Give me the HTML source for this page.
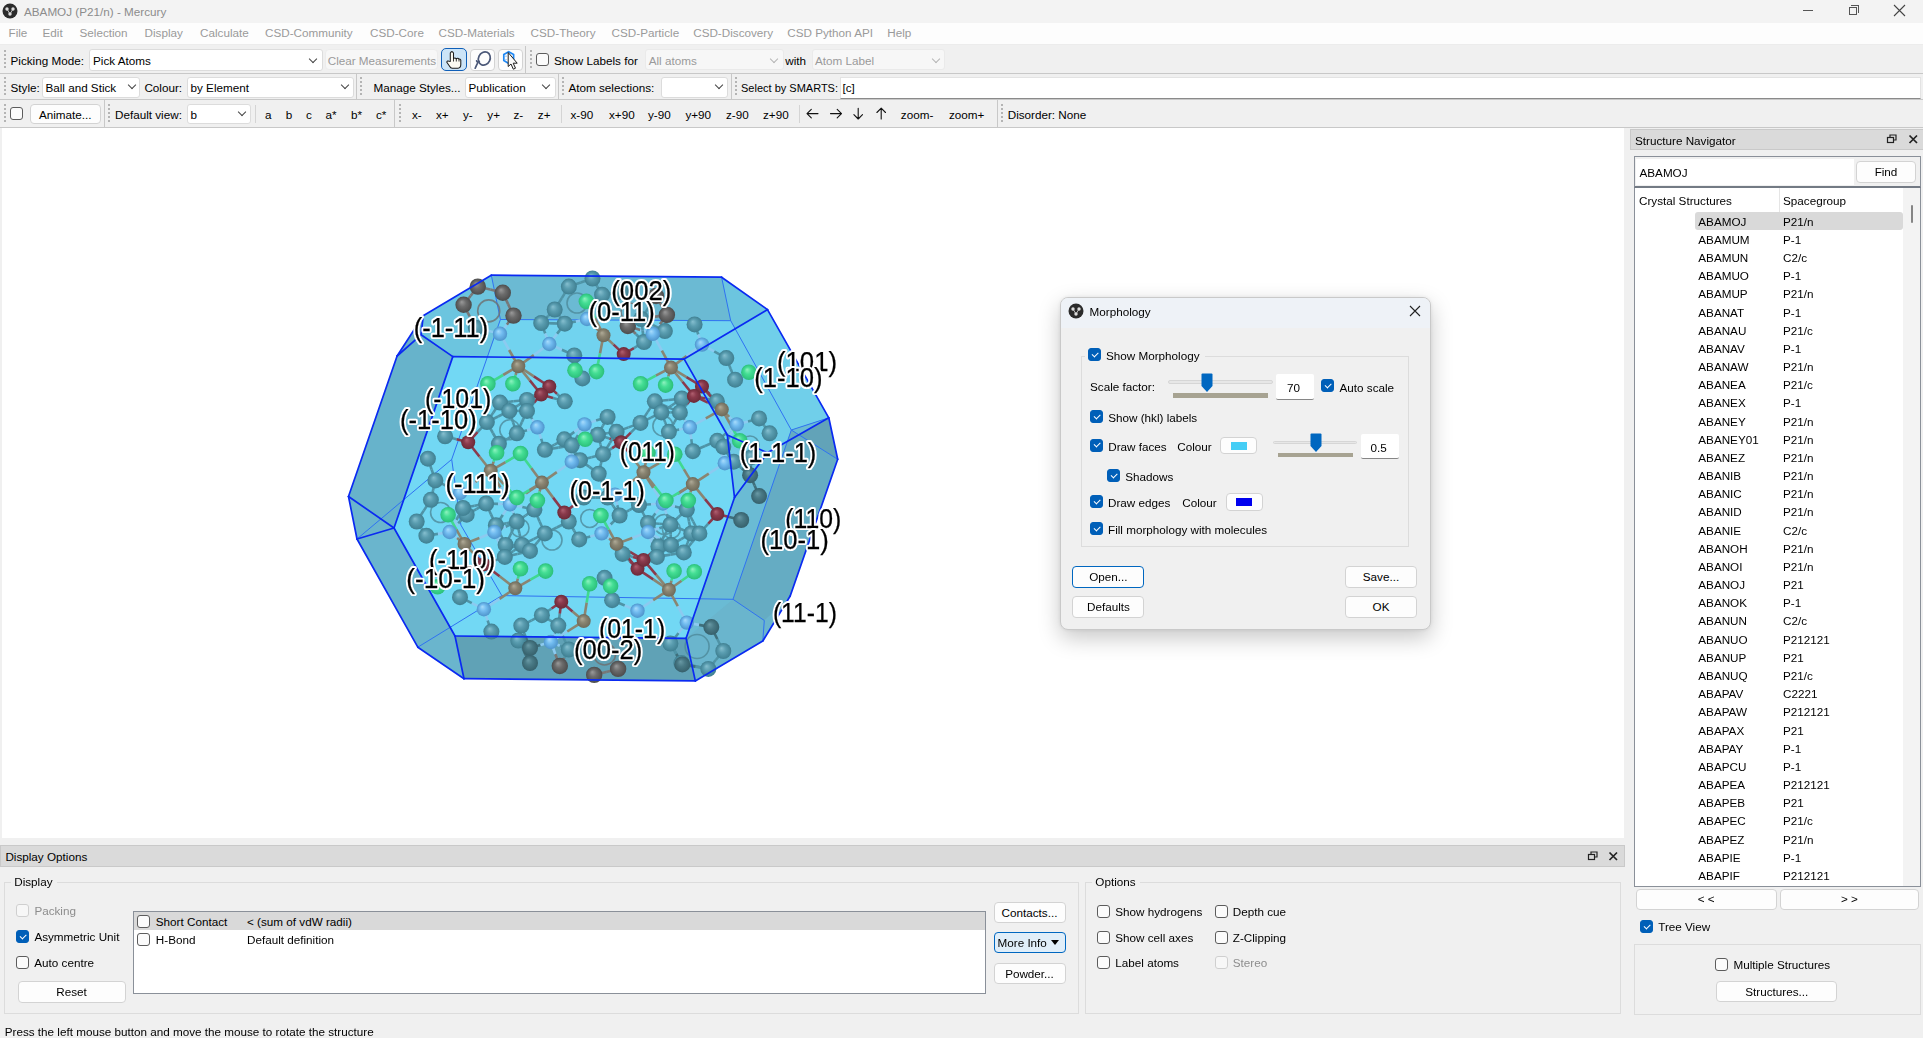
<!DOCTYPE html>
<html><head><meta charset="utf-8">
<style>
*{box-sizing:border-box}
html,body{margin:0;padding:0;width:1923px;height:1038px;overflow:hidden;background:#f0f0f0;font-family:"Liberation Sans",sans-serif;font-size:11.7px;color:#000}
.a{position:absolute}
.t{position:absolute;white-space:nowrap;line-height:14px;height:14px}
.g{color:#9a9a9a}
.bar{position:absolute;left:0;width:1923px}
.hd{position:absolute;width:2px;background:repeating-linear-gradient(to bottom,#b4b4b4 0 1.6px,transparent 1.6px 4px)}
.sep{position:absolute;width:1px;background:#d4d4d4}
.cb{position:absolute;width:13px;height:13px;border:1px solid #5c5c5c;border-radius:3px;background:#fbfbfb}
.cb.dis{border-color:#cfcfcf;background:#f7f7f7}
.cb.on{background:#005fb8;border-color:#005fb8}
.cb.on::after{content:"";position:absolute;left:3px;top:2.5px;width:5px;height:2.6px;border-left:1px solid #fff;border-bottom:1px solid #fff;transform:rotate(-45deg)}
.cmb{position:absolute;background:#fff;border:1px solid #dcdcdc;border-radius:3px}
.cmb.dis{background:#f7f7f7;border-color:#eaeaea}
.chev{position:absolute;width:6px;height:6px;border-right:1px solid #444;border-bottom:1px solid #444;transform:rotate(45deg)}
.chev.l{border-color:#b5b5b5}
.btn{position:absolute;background:#fdfdfd;border:1px solid #d3d3d3;border-radius:4px;text-align:center;line-height:19px;white-space:nowrap}
.btn.f{border-color:#0067c0}
.gb{position:absolute;border:1px solid #dcdcdc}
</style></head><body>

<!-- Title bar -->
<div class="bar" style="top:0;height:23px;background:#f3f3f3"></div>
<svg class="a" style="left:2px;top:3px" width="17" height="17" viewBox="0 0 17 17"><circle cx="8" cy="8" r="7.5" fill="#2b2b2b"/><circle cx="5" cy="6" r="1.7" fill="#ddd"/><circle cx="11" cy="6" r="1.7" fill="#ddd"/><circle cx="8" cy="11" r="1.7" fill="#ddd"/><path d="M5 6L8 11L11 6" stroke="#ddd" stroke-width="0.8" fill="none"/></svg>
<div class="t" style="left:24px;top:5px;color:#8c8c8c">ABAMOJ (P21/n) - Mercury</div>
<div class="a" style="left:1803px;top:10px;width:10px;height:1px;background:#555"></div>
<div class="a" style="left:1849px;top:7px;width:8px;height:8px;border:1px solid #555"></div>
<div class="a" style="left:1851px;top:5px;width:8px;height:8px;border-top:1px solid #555;border-right:1px solid #555"></div>
<svg class="a" style="left:1893px;top:4px" width="13" height="13"><path d="M1 1L12 12M12 1L1 12" stroke="#444" stroke-width="1.1"/></svg>

<!-- Menu bar -->
<div class="bar" style="top:23px;height:22px;background:#fdfdfd;border-bottom:1px solid #ececec"></div>
<div class="t g" style="top:26px;left:8.5px">File</div>
<div class="t g" style="top:26px;left:42.5px">Edit</div>
<div class="t g" style="top:26px;left:79.5px">Selection</div>
<div class="t g" style="top:26px;left:144.5px">Display</div>
<div class="t g" style="top:26px;left:200px">Calculate</div>
<div class="t g" style="top:26px;left:265px">CSD-Community</div>
<div class="t g" style="top:26px;left:370px">CSD-Core</div>
<div class="t g" style="top:26px;left:438.6px">CSD-Materials</div>
<div class="t g" style="top:26px;left:530.6px">CSD-Theory</div>
<div class="t g" style="top:26px;left:611.6px">CSD-Particle</div>
<div class="t g" style="top:26px;left:693.2px">CSD-Discovery</div>
<div class="t g" style="top:26px;left:787.3px">CSD Python API</div>
<div class="t g" style="top:26px;left:887.3px">Help</div>

<!-- Toolbar 1 -->
<div class="bar" style="top:46px;height:28px;background:#f0f0f0;border-bottom:1px solid #c8c8c8"></div>
<div class="hd" style="left:4px;top:50px;height:20px"></div>
<div class="t" style="left:10.5px;top:54px">Picking Mode:</div>
<div class="cmb" style="left:89px;top:49px;width:234px;height:22px"></div>
<div class="t" style="left:93px;top:54px">Pick Atoms</div>
<div class="chev" style="left:310px;top:56px"></div>
<div class="btn" style="left:325px;top:49px;width:113px;height:21px;background:#f7f7f7;border-color:#ececec"></div>
<div class="t g" style="left:327.7px;top:54px">Clear Measurements</div>
<div class="btn" style="left:441px;top:48px;width:26px;height:23px;background:#cce4f7;border:1.6px solid #0f5fb8;border-radius:5px"></div>
<div class="btn" style="left:469.5px;top:49px;width:25px;height:22px"></div>
<div class="btn" style="left:497.5px;top:49px;width:25px;height:22px"></div>
<svg class="a" style="left:441px;top:48px" width="26" height="23" viewBox="0 0 26 23"><path d="M9.3 13.5V5Q10.9 2.2 12.5 5V10.5Q14 9.3 15.3 10.8Q16.8 9.6 18 11.2Q19.2 10.6 19.8 12.2V16.5Q19.8 20 17 20.2H11.2Q9.6 20.2 8.6 18.2L5.8 14.2Q6.2 12.3 8.2 13.3Z" fill="#fbfaf2" stroke="#1d1d1d" stroke-width="1.05" stroke-linejoin="round"/><path d="M12.5 10.5V13.5M15.3 10.8V13.5M18 11.2V13.5" stroke="#1d1d1d" stroke-width="0.9"/></svg>
<svg class="a" style="left:469.5px;top:49px" width="25" height="22" viewBox="0 0 25 22"><ellipse cx="14.3" cy="9.5" rx="5.8" ry="6.8" transform="rotate(25 14.3 9.5)" fill="none" stroke="#4b5878" stroke-width="1.7"/><path d="M9.3 12.5Q7.2 14 6.6 11.8M8.4 12.6Q6.5 16 5.2 19.2" fill="none" stroke="#4b5878" stroke-width="1.7" stroke-linecap="round"/></svg>
<svg class="a" style="left:497.5px;top:49px" width="25" height="22" viewBox="0 0 25 22"><path d="M10.7 2.8L15.6 5.6V11.6L10.7 14.4L5.8 11.6V5.6Z" fill="none" stroke="#1e88f5" stroke-width="1.7"/><path d="M8 6.8V7.4M8 10V10.6" stroke="#1e88f5" stroke-width="1.2"/><path d="M10.2 3.5V17.5L13 15L15.3 20.2L17.5 19.2L15.2 14.2H19.2Z" fill="#fafafa" stroke="#1d1d1d" stroke-width="1" stroke-linejoin="round"/></svg>
<div class="sep" style="left:525px;top:46px;height:27px;background:#c8c8c8"></div>
<div class="hd" style="left:530px;top:50px;height:20px"></div>
<div class="cb" style="left:536px;top:52.5px"></div>
<div class="t" style="left:554px;top:54px">Show Labels for</div>
<div class="cmb dis" style="left:645px;top:49px;width:139px;height:21px"></div>
<div class="t g" style="left:648.7px;top:54px">All atoms</div>
<div class="chev l" style="left:771px;top:56px"></div>
<div class="t" style="left:785.3px;top:54px">with</div>
<div class="cmb dis" style="left:811.6px;top:49px;width:133px;height:21px"></div>
<div class="t g" style="left:815px;top:54px">Atom Label</div>
<div class="chev l" style="left:933px;top:56px"></div>

<!-- Toolbar 2 -->
<div class="bar" style="top:74px;height:26px;background:#f0f0f0;border-bottom:1px solid #c8c8c8"></div>
<div class="hd" style="left:4px;top:77px;height:19px"></div>
<div class="t" style="left:10.5px;top:81px">Style:</div>
<div class="cmb" style="left:41.6px;top:76.5px;width:98.5px;height:21px"></div>
<div class="t" style="left:45.4px;top:81px">Ball and Stick</div>
<div class="chev" style="left:129px;top:82px"></div>
<div class="t" style="left:144.4px;top:81px">Colour:</div>
<div class="cmb" style="left:186.7px;top:76.5px;width:167px;height:21px"></div>
<div class="t" style="left:190.5px;top:81px">by Element</div>
<div class="chev" style="left:342px;top:82px"></div>
<div class="sep" style="left:355.5px;top:74px;height:26px;background:#c8c8c8"></div>
<div class="hd" style="left:360px;top:77px;height:19px"></div>
<div class="t" style="left:373.5px;top:81px">Manage Styles...</div>
<div class="cmb" style="left:465px;top:76.5px;width:90.6px;height:21px"></div>
<div class="t" style="left:468.5px;top:81px">Publication</div>
<div class="chev" style="left:543px;top:82px"></div>
<div class="sep" style="left:557.7px;top:74px;height:26px;background:#c8c8c8"></div>
<div class="hd" style="left:562px;top:77px;height:19px"></div>
<div class="t" style="left:568.5px;top:81px">Atom selections:</div>
<div class="cmb" style="left:660.6px;top:76.5px;width:67.4px;height:21px"></div>
<div class="chev" style="left:716px;top:82px"></div>
<div class="sep" style="left:730.5px;top:74px;height:26px;background:#c8c8c8"></div>
<div class="hd" style="left:735px;top:77px;height:19px"></div>
<div class="t" style="left:741px;top:81px;font-size:11px">Select by SMARTS:</div>
<div class="a" style="left:839.8px;top:76.5px;width:1081px;height:22px;background:#fff;border:1px solid #e3e3e3;border-bottom:1px solid #8a8a8a"></div>
<div class="t" style="left:842.4px;top:81px">[c]</div>

<!-- Toolbar 3 -->
<div class="bar" style="top:100px;height:28px;background:#f0f0f0;border-bottom:1px solid #c8c8c8"></div>
<div class="hd" style="left:4px;top:104px;height:20px"></div>
<div class="cb" style="left:10.2px;top:107px"></div>
<div class="btn" style="left:29.6px;top:103.5px;width:71.4px;height:20.5px">Animate...</div>
<div class="sep" style="left:104px;top:100px;height:27px;background:#c8c8c8"></div>
<div class="hd" style="left:108px;top:104px;height:20px"></div>
<div class="t" style="left:115px;top:107.5px">Default view:</div>
<div class="cmb" style="left:186.7px;top:103.7px;width:64.3px;height:20.5px"></div>
<div class="t" style="left:190.5px;top:107.5px">b</div>
<div class="chev" style="left:239px;top:109px"></div>
<div class="sep" style="left:254.6px;top:105px;height:18px"></div>
<div class="t" style="left:265px;top:107.5px">a</div>
<div class="t" style="left:285.7px;top:107.5px">b</div>
<div class="t" style="left:306px;top:107.5px">c</div>
<div class="t" style="left:325.5px;top:107.5px">a*</div>
<div class="t" style="left:351px;top:107.5px">b*</div>
<div class="t" style="left:376px;top:107.5px">c*</div>
<div class="sep" style="left:394px;top:100px;height:27px;background:#c8c8c8"></div>
<div class="hd" style="left:399px;top:104px;height:20px"></div>
<div class="t" style="left:412px;top:107.5px">x-</div>
<div class="t" style="left:436px;top:107.5px">x+</div>
<div class="t" style="left:463px;top:107.5px">y-</div>
<div class="t" style="left:487.3px;top:107.5px">y+</div>
<div class="t" style="left:513.5px;top:107.5px">z-</div>
<div class="t" style="left:537.8px;top:107.5px">z+</div>
<div class="sep" style="left:560.8px;top:105px;height:18px"></div>
<div class="t" style="left:570.5px;top:107.5px">x-90</div>
<div class="t" style="left:609px;top:107.5px">x+90</div>
<div class="t" style="left:648px;top:107.5px">y-90</div>
<div class="t" style="left:685.4px;top:107.5px">y+90</div>
<div class="t" style="left:726px;top:107.5px">z-90</div>
<div class="t" style="left:763px;top:107.5px">z+90</div>
<div class="sep" style="left:799px;top:105px;height:18px"></div>




<svg class="a" style="left:800px;top:104px" width="90" height="20" viewBox="0 0 90 20" fill="none" stroke="#111" stroke-width="1.1" stroke-linecap="round" stroke-linejoin="round">
<path d="M7 9.6H18M11.3 5.3L7 9.6L11.3 13.9"/>
<path d="M30.5 9.6H41.5M37.2 5.3L41.5 9.6L37.2 13.9"/>
<path d="M58.2 4.2V15M53.9 10.7L58.2 15L62.5 10.7"/>
<path d="M81.2 4.2V15M76.9 8.5L81.2 4.2L85.5 8.5"/>
</svg>
<div class="t" style="left:900.8px;top:107.5px">zoom-</div>
<div class="t" style="left:949px;top:107.5px">zoom+</div>
<div class="sep" style="left:996.6px;top:100px;height:27px;background:#c8c8c8"></div>
<div class="hd" style="left:1001px;top:104px;height:20px"></div>
<div class="t" style="left:1007.7px;top:107.5px">Disorder: None</div>

<!-- 3D view -->
<div class="a" style="left:2px;top:128px;width:1622px;height:710px;background:#fff"></div>

<!-- MORPH -->
<svg class="a" style="left:0;top:0;will-change:transform" width="1923" height="1038" viewBox="0 0 1923 1038">
<defs>
<radialGradient id="gC" cx="0.5" cy="0.5" r="0.5" fx="0.38" fy="0.32"><stop offset="0" stop-color="#86bfcf"/><stop offset="0.45" stop-color="#5a9db0"/><stop offset="1" stop-color="#3f7f91"/></radialGradient>
<radialGradient id="gD" cx="0.5" cy="0.5" r="0.5" fx="0.38" fy="0.32"><stop offset="0" stop-color="#6a9aa6"/><stop offset="0.45" stop-color="#4a7a86"/><stop offset="1" stop-color="#36606b"/></radialGradient>
<radialGradient id="gG" cx="0.5" cy="0.5" r="0.5" fx="0.38" fy="0.32"><stop offset="0" stop-color="#9a9a9a"/><stop offset="0.45" stop-color="#6c6c6c"/><stop offset="1" stop-color="#4c4c4c"/></radialGradient>
<radialGradient id="gN" cx="0.5" cy="0.5" r="0.5" fx="0.38" fy="0.32"><stop offset="0" stop-color="#a8dcfc"/><stop offset="0.45" stop-color="#72bcf0"/><stop offset="1" stop-color="#4e94cc"/></radialGradient>
<radialGradient id="gL" cx="0.5" cy="0.5" r="0.5" fx="0.38" fy="0.32"><stop offset="0" stop-color="#8ff2c0"/><stop offset="0.45" stop-color="#44de94"/><stop offset="1" stop-color="#2bbf7a"/></radialGradient>
<radialGradient id="gO" cx="0.5" cy="0.5" r="0.5" fx="0.38" fy="0.32"><stop offset="0" stop-color="#b06070"/><stop offset="0.45" stop-color="#8a3a4c"/><stop offset="1" stop-color="#6c2a38"/></radialGradient>
<radialGradient id="gM" cx="0.5" cy="0.5" r="0.5" fx="0.38" fy="0.32"><stop offset="0" stop-color="#b0ab98"/><stop offset="0.45" stop-color="#8a8572"/><stop offset="1" stop-color="#6e6a5a"/></radialGradient>
</defs>
<polygon points="491.3,275.2 721.6,277.2 767.5,309.6 828.8,417.8 837.7,459.3 790.2,596.0 762.8,641.0 695.3,680.9 464.0,678.7 417.8,647.2 357.0,539.0 348.5,496.5 397.1,356.0 423.2,315.8" fill="#6ab5cd"/>
<polygon points="491.3,275.2 721.6,277.2 730.7,320.7 500.4,319.5" fill="#6bbad3"/>
<polygon points="423.2,315.8 491.3,275.2 500.4,319.5 487.5,356.9 452.8,356.6 421.1,334.8" fill="#6cc5df"/>
<polygon points="500.4,319.5 730.7,320.7 735.2,328.8 684.2,359.1 487.5,356.9" fill="#71d3ef"/>
<polygon points="721.6,277.2 767.5,309.6 735.2,328.8 730.7,320.7" fill="#6cc5df"/>
<polygon points="423.2,315.8 421.1,334.8 397.1,356.0" fill="#6ab0c6"/>
<polygon points="397.1,356.0 421.1,334.8 452.8,356.6 394.0,528.0 348.5,496.5" fill="#67b3cb"/>
<polygon points="452.8,356.6 684.2,359.1 727.3,435.0 734.5,497.5 686.1,638.3 455.0,636.0 394.0,528.0" fill="#72d8f4"/>
<polygon points="684.2,359.1 767.5,309.6 828.8,417.8 767.4,452.8 727.3,435.0" fill="#70cfea"/>
<polygon points="727.3,435.0 734.5,497.5 767.4,452.8" fill="#6ec9e4"/>
<polygon points="828.8,417.8 837.7,459.3 791.3,430.0" fill="#62a3b8"/>
<polygon points="734.5,497.5 767.4,452.8 828.8,417.8 791.3,430.0 733.0,599.3 686.1,638.3" fill="#6abbd4"/>
<polygon points="791.3,430.0 837.7,459.3 790.2,596.0 764.3,620.5 733.0,599.3" fill="#65acc3"/>
<polygon points="455.0,636.0 686.1,638.3 695.3,680.9 464.0,678.7" fill="#60a2b6"/>
<line x1="491.3" y1="275.2" x2="500.4" y2="319.5" stroke="#2f72f2" stroke-width="1"/>
<line x1="721.6" y1="277.2" x2="730.7" y2="320.7" stroke="#2f72f2" stroke-width="1"/>
<line x1="500.4" y1="319.5" x2="730.7" y2="320.7" stroke="#2f72f2" stroke-width="1"/>
<line x1="730.7" y1="320.7" x2="791.3" y2="430" stroke="#2f72f2" stroke-width="1"/>
<line x1="791.3" y1="430" x2="828.8" y2="417.8" stroke="#2f72f2" stroke-width="1"/>
<line x1="791.3" y1="430" x2="837.7" y2="459.3" stroke="#2f72f2" stroke-width="1"/>
<line x1="791.3" y1="430" x2="733" y2="599.3" stroke="#2f72f2" stroke-width="1"/>
<line x1="733" y1="599.3" x2="764.3" y2="620.5" stroke="#2f72f2" stroke-width="1"/>
<line x1="764.3" y1="620.5" x2="762.8" y2="641" stroke="#2f72f2" stroke-width="1"/>
<line x1="500.4" y1="319.5" x2="451.7" y2="459.4" stroke="#2f72f2" stroke-width="1"/>
<line x1="357" y1="539" x2="451.7" y2="459.4" stroke="#2f72f2" stroke-width="1"/>
<line x1="451.7" y1="459.4" x2="460.9" y2="525.1" stroke="#2f72f2" stroke-width="1"/>
<line x1="460.9" y1="525.1" x2="501.8" y2="595.6" stroke="#2f72f2" stroke-width="1"/>
<line x1="417.8" y1="647.2" x2="501.8" y2="595.6" stroke="#2f72f2" stroke-width="1"/>
<line x1="501.8" y1="595.6" x2="733" y2="599.3" stroke="#2f72f2" stroke-width="1"/>
<circle cx="488.7" cy="310.9" r="11" fill="none" stroke="#6e6e6e" stroke-width="1.6" opacity="0.8"/>
<circle cx="440.6" cy="512.5" r="10" fill="none" stroke="#4d8a9a" stroke-width="1.6" opacity="0.8"/>
<circle cx="697.1" cy="646.5" r="12" fill="none" stroke="#4d8a9a" stroke-width="1.6" opacity="0.8"/>
<circle cx="604.6" cy="654" r="11" fill="none" stroke="#6e6e6e" stroke-width="1.6" opacity="0.8"/>
<circle cx="664.4" cy="524.5" r="10" fill="none" stroke="#4d8a9a" stroke-width="1.6" opacity="0.8"/>
<circle cx="662.9" cy="425.9" r="10" fill="none" stroke="#4d8a9a" stroke-width="1.6" opacity="0.8"/>
<circle cx="520" cy="528" r="9" fill="none" stroke="#4d8a9a" stroke-width="1.6" opacity="0.8"/>
<circle cx="589.7" cy="518.5" r="9" fill="none" stroke="#4d8a9a" stroke-width="1.6" opacity="0.8"/>
<circle cx="577" cy="303" r="10" fill="none" stroke="#4d8a9a" stroke-width="1.6" opacity="0.8"/>
<circle cx="630" cy="312" r="9" fill="none" stroke="#6e6e6e" stroke-width="1.6" opacity="0.8"/>
<circle cx="750" cy="445" r="9" fill="none" stroke="#4d8a9a" stroke-width="1.6" opacity="0.8"/>
<circle cx="552" cy="540" r="10" fill="none" stroke="#4d8a9a" stroke-width="1.6" opacity="0.8"/>
<circle cx="509.8" cy="429.8" r="10" fill="none" stroke="#4d8a9a" stroke-width="1.6" opacity="0.8"/>
<circle cx="671.4" cy="529.3" r="9" fill="none" stroke="#4d8a9a" stroke-width="1.6" opacity="0.8"/>
<line x1="477.8" y1="286.6" x2="490.3" y2="289.6" stroke="#777" stroke-width="2.6"/>
<line x1="490.3" y1="289.6" x2="502.8" y2="292.7" stroke="#777" stroke-width="2.6"/>
<line x1="477.8" y1="286.6" x2="470.7" y2="295.7" stroke="#777" stroke-width="2.6"/>
<line x1="470.7" y1="295.7" x2="463.6" y2="304.8" stroke="#777" stroke-width="2.6"/>
<line x1="502.8" y1="292.7" x2="508.1" y2="304.1" stroke="#777" stroke-width="2.6"/>
<line x1="508.1" y1="304.1" x2="513.5" y2="315.6" stroke="#777" stroke-width="2.6"/>
<line x1="463.6" y1="304.8" x2="469.7" y2="316.3" stroke="#777" stroke-width="2.6"/>
<line x1="469.7" y1="316.3" x2="475.8" y2="327.8" stroke="#4f93a6" stroke-width="2.6"/>
<line x1="513.5" y1="315.6" x2="506.8" y2="324.7" stroke="#777" stroke-width="2.6"/>
<line x1="506.8" y1="324.7" x2="500.0" y2="333.8" stroke="#8ccaf0" stroke-width="2.6"/>
<line x1="666.9" y1="314.9" x2="661.5" y2="305.4" stroke="#777" stroke-width="2.6"/>
<line x1="661.5" y1="305.4" x2="656.0" y2="296.0" stroke="#777" stroke-width="2.6"/>
<line x1="666.9" y1="314.9" x2="665.9" y2="323.0" stroke="#777" stroke-width="2.6"/>
<line x1="665.9" y1="323.0" x2="664.9" y2="331.1" stroke="#4f93a6" stroke-width="2.6"/>
<line x1="666.9" y1="314.9" x2="654.1" y2="316.9" stroke="#777" stroke-width="2.6"/>
<line x1="654.1" y1="316.9" x2="641.3" y2="319.0" stroke="#4f93a6" stroke-width="2.6"/>
<line x1="666.9" y1="314.9" x2="659.8" y2="324.4" stroke="#777" stroke-width="2.6"/>
<line x1="659.8" y1="324.4" x2="652.8" y2="333.8" stroke="#8ccaf0" stroke-width="2.6"/>
<line x1="656.0" y1="296.0" x2="648.6" y2="307.5" stroke="#777" stroke-width="2.6"/>
<line x1="648.6" y1="307.5" x2="641.3" y2="319.0" stroke="#4f93a6" stroke-width="2.6"/>
<line x1="627.8" y1="326.0" x2="635.9" y2="334.0" stroke="#777" stroke-width="2.6"/>
<line x1="635.9" y1="334.0" x2="644.0" y2="342.0" stroke="#4f93a6" stroke-width="2.6"/>
<line x1="627.8" y1="326.0" x2="634.5" y2="322.5" stroke="#777" stroke-width="2.6"/>
<line x1="634.5" y1="322.5" x2="641.3" y2="319.0" stroke="#4f93a6" stroke-width="2.6"/>
<line x1="627.8" y1="326.0" x2="640.3" y2="329.9" stroke="#777" stroke-width="2.6"/>
<line x1="640.3" y1="329.9" x2="652.8" y2="333.8" stroke="#8ccaf0" stroke-width="2.6"/>
<line x1="559.8" y1="666.0" x2="564.3" y2="657.8" stroke="#777" stroke-width="2.6"/>
<line x1="564.3" y1="657.8" x2="568.8" y2="649.5" stroke="#4f93a6" stroke-width="2.6"/>
<line x1="559.8" y1="666.0" x2="555.3" y2="654.0" stroke="#777" stroke-width="2.6"/>
<line x1="555.3" y1="654.0" x2="550.9" y2="642.0" stroke="#8ccaf0" stroke-width="2.6"/>
<line x1="594.2" y1="674.9" x2="606.2" y2="671.9" stroke="#777" stroke-width="2.6"/>
<line x1="606.2" y1="671.9" x2="618.1" y2="668.9" stroke="#777" stroke-width="2.6"/>
<line x1="475.8" y1="327.8" x2="487.9" y2="330.8" stroke="#4f93a6" stroke-width="2.6"/>
<line x1="487.9" y1="330.8" x2="500.0" y2="333.8" stroke="#8ccaf0" stroke-width="2.6"/>
<line x1="541.2" y1="323.0" x2="553.0" y2="323.4" stroke="#4f93a6" stroke-width="2.6"/>
<line x1="553.0" y1="323.4" x2="564.8" y2="323.7" stroke="#4f93a6" stroke-width="2.6"/>
<line x1="541.2" y1="323.0" x2="548.0" y2="316.2" stroke="#4f93a6" stroke-width="2.6"/>
<line x1="548.0" y1="316.2" x2="554.7" y2="309.5" stroke="#4f93a6" stroke-width="2.6"/>
<line x1="541.2" y1="323.0" x2="545.2" y2="333.5" stroke="#4f93a6" stroke-width="2.6"/>
<line x1="545.2" y1="333.5" x2="549.3" y2="344.0" stroke="#8ccaf0" stroke-width="2.6"/>
<line x1="564.8" y1="323.7" x2="559.8" y2="316.6" stroke="#4f93a6" stroke-width="2.6"/>
<line x1="559.8" y1="316.6" x2="554.7" y2="309.5" stroke="#4f93a6" stroke-width="2.6"/>
<line x1="564.8" y1="323.7" x2="557.0" y2="333.9" stroke="#4f93a6" stroke-width="2.6"/>
<line x1="557.0" y1="333.9" x2="549.3" y2="344.0" stroke="#8ccaf0" stroke-width="2.6"/>
<line x1="564.8" y1="323.7" x2="575.9" y2="321.4" stroke="#4f93a6" stroke-width="2.6"/>
<line x1="575.9" y1="321.4" x2="587.0" y2="319.0" stroke="#8ccaf0" stroke-width="2.6"/>
<line x1="568.9" y1="286.6" x2="561.8" y2="298.1" stroke="#4f93a6" stroke-width="2.6"/>
<line x1="561.8" y1="298.1" x2="554.7" y2="309.5" stroke="#4f93a6" stroke-width="2.6"/>
<line x1="568.9" y1="286.6" x2="580.7" y2="282.6" stroke="#4f93a6" stroke-width="2.6"/>
<line x1="580.7" y1="282.6" x2="592.5" y2="278.5" stroke="#4f93a6" stroke-width="2.6"/>
<line x1="592.5" y1="278.5" x2="597.3" y2="286.6" stroke="#4f93a6" stroke-width="2.6"/>
<line x1="597.3" y1="286.6" x2="602.1" y2="294.7" stroke="#4f93a6" stroke-width="2.6"/>
<line x1="574.3" y1="355.4" x2="578.3" y2="366.9" stroke="#4f93a6" stroke-width="2.6"/>
<line x1="578.3" y1="366.9" x2="582.4" y2="378.4" stroke="#4f93a6" stroke-width="2.6"/>
<line x1="574.3" y1="355.4" x2="561.8" y2="349.7" stroke="#4f93a6" stroke-width="2.6"/>
<line x1="561.8" y1="349.7" x2="549.3" y2="344.0" stroke="#8ccaf0" stroke-width="2.6"/>
<line x1="564.8" y1="401.3" x2="557.0" y2="393.9" stroke="#4f93a6" stroke-width="2.6"/>
<line x1="557.0" y1="393.9" x2="549.3" y2="386.5" stroke="#8a3a4c" stroke-width="2.6"/>
<line x1="564.8" y1="401.3" x2="553.0" y2="397.9" stroke="#4f93a6" stroke-width="2.6"/>
<line x1="553.0" y1="397.9" x2="541.2" y2="394.5" stroke="#8a3a4c" stroke-width="2.6"/>
<line x1="527.0" y1="400.0" x2="513.5" y2="401.3" stroke="#4f93a6" stroke-width="2.6"/>
<line x1="513.5" y1="401.3" x2="500.0" y2="402.6" stroke="#4f93a6" stroke-width="2.6"/>
<line x1="527.0" y1="400.0" x2="518.1" y2="405.4" stroke="#4f93a6" stroke-width="2.6"/>
<line x1="518.1" y1="405.4" x2="509.3" y2="410.9" stroke="#4f93a6" stroke-width="2.6"/>
<line x1="527.0" y1="400.0" x2="538.1" y2="393.2" stroke="#4f93a6" stroke-width="2.6"/>
<line x1="538.1" y1="393.2" x2="549.3" y2="386.5" stroke="#8a3a4c" stroke-width="2.6"/>
<line x1="527.0" y1="400.0" x2="534.1" y2="397.2" stroke="#4f93a6" stroke-width="2.6"/>
<line x1="534.1" y1="397.2" x2="541.2" y2="394.5" stroke="#8a3a4c" stroke-width="2.6"/>
<line x1="500.0" y1="402.6" x2="493.4" y2="412.4" stroke="#4f93a6" stroke-width="2.6"/>
<line x1="493.4" y1="412.4" x2="486.9" y2="422.1" stroke="#4f93a6" stroke-width="2.6"/>
<line x1="500.0" y1="402.6" x2="504.6" y2="406.8" stroke="#4f93a6" stroke-width="2.6"/>
<line x1="504.6" y1="406.8" x2="509.3" y2="410.9" stroke="#4f93a6" stroke-width="2.6"/>
<line x1="602.1" y1="294.7" x2="611.5" y2="293.4" stroke="#4f93a6" stroke-width="2.6"/>
<line x1="611.5" y1="293.4" x2="621.0" y2="292.0" stroke="#4f93a6" stroke-width="2.6"/>
<line x1="644.0" y1="342.0" x2="654.5" y2="336.6" stroke="#4f93a6" stroke-width="2.6"/>
<line x1="654.5" y1="336.6" x2="664.9" y2="331.1" stroke="#4f93a6" stroke-width="2.6"/>
<line x1="644.0" y1="342.0" x2="642.6" y2="330.5" stroke="#4f93a6" stroke-width="2.6"/>
<line x1="642.6" y1="330.5" x2="641.3" y2="319.0" stroke="#4f93a6" stroke-width="2.6"/>
<line x1="644.0" y1="342.0" x2="648.4" y2="337.9" stroke="#4f93a6" stroke-width="2.6"/>
<line x1="648.4" y1="337.9" x2="652.8" y2="333.8" stroke="#8ccaf0" stroke-width="2.6"/>
<line x1="644.0" y1="342.0" x2="633.9" y2="348.1" stroke="#4f93a6" stroke-width="2.6"/>
<line x1="633.9" y1="348.1" x2="623.7" y2="354.1" stroke="#8a3a4c" stroke-width="2.6"/>
<line x1="664.9" y1="331.1" x2="653.1" y2="325.1" stroke="#4f93a6" stroke-width="2.6"/>
<line x1="653.1" y1="325.1" x2="641.3" y2="319.0" stroke="#4f93a6" stroke-width="2.6"/>
<line x1="664.9" y1="331.1" x2="658.8" y2="332.5" stroke="#4f93a6" stroke-width="2.6"/>
<line x1="658.8" y1="332.5" x2="652.8" y2="333.8" stroke="#8ccaf0" stroke-width="2.6"/>
<line x1="694.6" y1="324.4" x2="698.3" y2="334.5" stroke="#4f93a6" stroke-width="2.6"/>
<line x1="698.3" y1="334.5" x2="702.0" y2="344.6" stroke="#8ccaf0" stroke-width="2.6"/>
<line x1="726.3" y1="358.1" x2="730.7" y2="368.9" stroke="#4f93a6" stroke-width="2.6"/>
<line x1="730.7" y1="368.9" x2="735.1" y2="379.7" stroke="#4f93a6" stroke-width="2.6"/>
<line x1="726.3" y1="358.1" x2="714.1" y2="351.4" stroke="#4f93a6" stroke-width="2.6"/>
<line x1="714.1" y1="351.4" x2="702.0" y2="344.6" stroke="#8ccaf0" stroke-width="2.6"/>
<line x1="654.8" y1="401.3" x2="668.3" y2="400.0" stroke="#4f93a6" stroke-width="2.6"/>
<line x1="668.3" y1="400.0" x2="681.8" y2="398.6" stroke="#4f93a6" stroke-width="2.6"/>
<line x1="654.8" y1="401.3" x2="647.6" y2="412.1" stroke="#4f93a6" stroke-width="2.6"/>
<line x1="647.6" y1="412.1" x2="640.5" y2="422.9" stroke="#4f93a6" stroke-width="2.6"/>
<line x1="654.8" y1="401.3" x2="658.1" y2="406.9" stroke="#4f93a6" stroke-width="2.6"/>
<line x1="658.1" y1="406.9" x2="661.4" y2="412.4" stroke="#4f93a6" stroke-width="2.6"/>
<line x1="654.8" y1="401.3" x2="667.3" y2="406.9" stroke="#4f93a6" stroke-width="2.6"/>
<line x1="667.3" y1="406.9" x2="679.9" y2="412.4" stroke="#4f93a6" stroke-width="2.6"/>
<line x1="681.8" y1="398.6" x2="671.6" y2="405.5" stroke="#4f93a6" stroke-width="2.6"/>
<line x1="671.6" y1="405.5" x2="661.4" y2="412.4" stroke="#4f93a6" stroke-width="2.6"/>
<line x1="681.8" y1="398.6" x2="680.8" y2="405.5" stroke="#4f93a6" stroke-width="2.6"/>
<line x1="680.8" y1="405.5" x2="679.9" y2="412.4" stroke="#4f93a6" stroke-width="2.6"/>
<line x1="681.8" y1="398.6" x2="691.9" y2="392.6" stroke="#4f93a6" stroke-width="2.6"/>
<line x1="691.9" y1="392.6" x2="702.0" y2="386.5" stroke="#8a3a4c" stroke-width="2.6"/>
<line x1="681.8" y1="398.6" x2="687.8" y2="397.2" stroke="#4f93a6" stroke-width="2.6"/>
<line x1="687.8" y1="397.2" x2="693.9" y2="395.9" stroke="#8a3a4c" stroke-width="2.6"/>
<line x1="716.9" y1="401.3" x2="709.5" y2="393.9" stroke="#4f93a6" stroke-width="2.6"/>
<line x1="709.5" y1="393.9" x2="702.0" y2="386.5" stroke="#8a3a4c" stroke-width="2.6"/>
<line x1="716.9" y1="401.3" x2="705.4" y2="398.6" stroke="#4f93a6" stroke-width="2.6"/>
<line x1="705.4" y1="398.6" x2="693.9" y2="395.9" stroke="#8a3a4c" stroke-width="2.6"/>
<line x1="641.3" y1="319.0" x2="647.0" y2="326.4" stroke="#4f93a6" stroke-width="2.6"/>
<line x1="647.0" y1="326.4" x2="652.8" y2="333.8" stroke="#8ccaf0" stroke-width="2.6"/>
<line x1="445.1" y1="436.3" x2="456.6" y2="439.3" stroke="#4f93a6" stroke-width="2.6"/>
<line x1="456.6" y1="439.3" x2="468.2" y2="442.3" stroke="#8a3a4c" stroke-width="2.6"/>
<line x1="427.9" y1="458.7" x2="431.6" y2="469.5" stroke="#4f93a6" stroke-width="2.6"/>
<line x1="431.6" y1="469.5" x2="435.4" y2="480.4" stroke="#4f93a6" stroke-width="2.6"/>
<line x1="435.4" y1="480.4" x2="433.1" y2="490.1" stroke="#4f93a6" stroke-width="2.6"/>
<line x1="433.1" y1="490.1" x2="430.9" y2="499.8" stroke="#4f93a6" stroke-width="2.6"/>
<line x1="435.4" y1="480.4" x2="447.7" y2="486.7" stroke="#4f93a6" stroke-width="2.6"/>
<line x1="447.7" y1="486.7" x2="460.0" y2="493.0" stroke="#8ccaf0" stroke-width="2.6"/>
<line x1="430.9" y1="499.8" x2="423.8" y2="510.6" stroke="#4f93a6" stroke-width="2.6"/>
<line x1="423.8" y1="510.6" x2="416.7" y2="521.5" stroke="#4f93a6" stroke-width="2.6"/>
<line x1="416.7" y1="521.5" x2="421.5" y2="528.6" stroke="#4f93a6" stroke-width="2.6"/>
<line x1="421.5" y1="528.6" x2="426.4" y2="535.7" stroke="#4f93a6" stroke-width="2.6"/>
<line x1="426.4" y1="535.7" x2="438.0" y2="533.9" stroke="#4f93a6" stroke-width="2.6"/>
<line x1="438.0" y1="533.9" x2="449.6" y2="532.0" stroke="#8ccaf0" stroke-width="2.6"/>
<line x1="486.9" y1="422.1" x2="498.1" y2="416.5" stroke="#4f93a6" stroke-width="2.6"/>
<line x1="498.1" y1="416.5" x2="509.3" y2="410.9" stroke="#4f93a6" stroke-width="2.6"/>
<line x1="486.9" y1="422.1" x2="492.9" y2="433.0" stroke="#4f93a6" stroke-width="2.6"/>
<line x1="492.9" y1="433.0" x2="498.9" y2="443.8" stroke="#4f93a6" stroke-width="2.6"/>
<line x1="486.9" y1="422.1" x2="477.5" y2="432.2" stroke="#4f93a6" stroke-width="2.6"/>
<line x1="477.5" y1="432.2" x2="468.2" y2="442.3" stroke="#8a3a4c" stroke-width="2.6"/>
<line x1="509.3" y1="410.9" x2="513.0" y2="422.1" stroke="#4f93a6" stroke-width="2.6"/>
<line x1="513.0" y1="422.1" x2="516.8" y2="433.3" stroke="#4f93a6" stroke-width="2.6"/>
<line x1="509.3" y1="410.9" x2="518.1" y2="410.9" stroke="#4f93a6" stroke-width="2.6"/>
<line x1="518.1" y1="410.9" x2="527.0" y2="410.9" stroke="#4f93a6" stroke-width="2.6"/>
<line x1="516.8" y1="433.3" x2="507.8" y2="438.6" stroke="#4f93a6" stroke-width="2.6"/>
<line x1="507.8" y1="438.6" x2="498.9" y2="443.8" stroke="#4f93a6" stroke-width="2.6"/>
<line x1="516.8" y1="433.3" x2="521.9" y2="422.1" stroke="#4f93a6" stroke-width="2.6"/>
<line x1="521.9" y1="422.1" x2="527.0" y2="410.9" stroke="#4f93a6" stroke-width="2.6"/>
<line x1="516.8" y1="433.3" x2="527.1" y2="430.3" stroke="#4f93a6" stroke-width="2.6"/>
<line x1="527.1" y1="430.3" x2="537.4" y2="427.3" stroke="#8ccaf0" stroke-width="2.6"/>
<line x1="486.2" y1="503.5" x2="476.4" y2="509.1" stroke="#4f93a6" stroke-width="2.6"/>
<line x1="476.4" y1="509.1" x2="466.7" y2="514.7" stroke="#4f93a6" stroke-width="2.6"/>
<line x1="486.2" y1="503.5" x2="491.0" y2="514.4" stroke="#4f93a6" stroke-width="2.6"/>
<line x1="491.0" y1="514.4" x2="495.9" y2="525.2" stroke="#4f93a6" stroke-width="2.6"/>
<line x1="486.2" y1="503.5" x2="474.6" y2="505.8" stroke="#4f93a6" stroke-width="2.6"/>
<line x1="474.6" y1="505.8" x2="463.0" y2="508.0" stroke="#4f93a6" stroke-width="2.6"/>
<line x1="486.2" y1="503.5" x2="498.1" y2="503.9" stroke="#4f93a6" stroke-width="2.6"/>
<line x1="498.1" y1="503.9" x2="510.0" y2="504.3" stroke="#8ccaf0" stroke-width="2.6"/>
<line x1="466.7" y1="514.7" x2="463.4" y2="503.9" stroke="#4f93a6" stroke-width="2.6"/>
<line x1="463.4" y1="503.9" x2="460.0" y2="493.0" stroke="#8ccaf0" stroke-width="2.6"/>
<line x1="466.7" y1="514.7" x2="458.1" y2="523.4" stroke="#4f93a6" stroke-width="2.6"/>
<line x1="458.1" y1="523.4" x2="449.6" y2="532.0" stroke="#8ccaf0" stroke-width="2.6"/>
<line x1="495.9" y1="525.2" x2="506.3" y2="523.4" stroke="#4f93a6" stroke-width="2.6"/>
<line x1="506.3" y1="523.4" x2="516.8" y2="521.5" stroke="#4f93a6" stroke-width="2.6"/>
<line x1="495.9" y1="525.2" x2="500.8" y2="535.0" stroke="#4f93a6" stroke-width="2.6"/>
<line x1="500.8" y1="535.0" x2="505.6" y2="544.9" stroke="#4f93a6" stroke-width="2.6"/>
<line x1="495.9" y1="525.2" x2="502.9" y2="514.8" stroke="#4f93a6" stroke-width="2.6"/>
<line x1="502.9" y1="514.8" x2="510.0" y2="504.3" stroke="#8ccaf0" stroke-width="2.6"/>
<line x1="516.8" y1="521.5" x2="525.6" y2="515.5" stroke="#4f93a6" stroke-width="2.6"/>
<line x1="525.6" y1="515.5" x2="534.4" y2="509.5" stroke="#4f93a6" stroke-width="2.6"/>
<line x1="516.8" y1="521.5" x2="511.2" y2="533.2" stroke="#4f93a6" stroke-width="2.6"/>
<line x1="511.2" y1="533.2" x2="505.6" y2="544.9" stroke="#4f93a6" stroke-width="2.6"/>
<line x1="516.8" y1="521.5" x2="519.4" y2="533.2" stroke="#4f93a6" stroke-width="2.6"/>
<line x1="519.4" y1="533.2" x2="522.0" y2="545.0" stroke="#4f93a6" stroke-width="2.6"/>
<line x1="516.8" y1="521.5" x2="513.4" y2="512.9" stroke="#4f93a6" stroke-width="2.6"/>
<line x1="513.4" y1="512.9" x2="510.0" y2="504.3" stroke="#8ccaf0" stroke-width="2.6"/>
<line x1="516.8" y1="521.5" x2="505.6" y2="526.8" stroke="#4f93a6" stroke-width="2.6"/>
<line x1="505.6" y1="526.8" x2="494.4" y2="532.0" stroke="#8ccaf0" stroke-width="2.6"/>
<line x1="463.0" y1="508.0" x2="461.5" y2="500.5" stroke="#4f93a6" stroke-width="2.6"/>
<line x1="461.5" y1="500.5" x2="460.0" y2="493.0" stroke="#8ccaf0" stroke-width="2.6"/>
<line x1="463.0" y1="508.0" x2="456.3" y2="520.0" stroke="#4f93a6" stroke-width="2.6"/>
<line x1="456.3" y1="520.0" x2="449.6" y2="532.0" stroke="#8ccaf0" stroke-width="2.6"/>
<line x1="527.0" y1="410.9" x2="532.2" y2="419.1" stroke="#4f93a6" stroke-width="2.6"/>
<line x1="532.2" y1="419.1" x2="537.4" y2="427.3" stroke="#8ccaf0" stroke-width="2.6"/>
<line x1="527.0" y1="410.9" x2="534.1" y2="402.7" stroke="#4f93a6" stroke-width="2.6"/>
<line x1="534.1" y1="402.7" x2="541.2" y2="394.5" stroke="#8a3a4c" stroke-width="2.6"/>
<line x1="544.9" y1="449.8" x2="554.6" y2="444.6" stroke="#4f93a6" stroke-width="2.6"/>
<line x1="554.6" y1="444.6" x2="564.3" y2="439.3" stroke="#4f93a6" stroke-width="2.6"/>
<line x1="544.9" y1="449.8" x2="558.3" y2="447.6" stroke="#4f93a6" stroke-width="2.6"/>
<line x1="558.3" y1="447.6" x2="571.8" y2="445.3" stroke="#4f93a6" stroke-width="2.6"/>
<line x1="544.9" y1="449.8" x2="541.1" y2="438.6" stroke="#4f93a6" stroke-width="2.6"/>
<line x1="541.1" y1="438.6" x2="537.4" y2="427.3" stroke="#8ccaf0" stroke-width="2.6"/>
<line x1="564.3" y1="439.3" x2="572.1" y2="449.8" stroke="#4f93a6" stroke-width="2.6"/>
<line x1="572.1" y1="449.8" x2="580.0" y2="460.2" stroke="#4f93a6" stroke-width="2.6"/>
<line x1="564.3" y1="439.3" x2="574.4" y2="431.9" stroke="#4f93a6" stroke-width="2.6"/>
<line x1="574.4" y1="431.9" x2="584.5" y2="424.4" stroke="#8ccaf0" stroke-width="2.6"/>
<line x1="564.3" y1="439.3" x2="568.0" y2="450.5" stroke="#4f93a6" stroke-width="2.6"/>
<line x1="568.0" y1="450.5" x2="571.8" y2="461.7" stroke="#8ccaf0" stroke-width="2.6"/>
<line x1="571.8" y1="445.3" x2="575.9" y2="452.8" stroke="#4f93a6" stroke-width="2.6"/>
<line x1="575.9" y1="452.8" x2="580.0" y2="460.2" stroke="#4f93a6" stroke-width="2.6"/>
<line x1="571.8" y1="445.3" x2="578.1" y2="434.9" stroke="#4f93a6" stroke-width="2.6"/>
<line x1="578.1" y1="434.9" x2="584.5" y2="424.4" stroke="#8ccaf0" stroke-width="2.6"/>
<line x1="571.8" y1="445.3" x2="571.8" y2="453.5" stroke="#4f93a6" stroke-width="2.6"/>
<line x1="571.8" y1="453.5" x2="571.8" y2="461.7" stroke="#8ccaf0" stroke-width="2.6"/>
<line x1="580.0" y1="460.2" x2="591.5" y2="457.2" stroke="#4f93a6" stroke-width="2.6"/>
<line x1="591.5" y1="457.2" x2="603.1" y2="454.2" stroke="#4f93a6" stroke-width="2.6"/>
<line x1="580.0" y1="460.2" x2="589.4" y2="466.9" stroke="#4f93a6" stroke-width="2.6"/>
<line x1="589.4" y1="466.9" x2="598.7" y2="473.7" stroke="#4f93a6" stroke-width="2.6"/>
<line x1="597.9" y1="434.8" x2="602.8" y2="425.9" stroke="#4f93a6" stroke-width="2.6"/>
<line x1="602.8" y1="425.9" x2="607.6" y2="416.9" stroke="#4f93a6" stroke-width="2.6"/>
<line x1="597.9" y1="434.8" x2="607.2" y2="433.3" stroke="#4f93a6" stroke-width="2.6"/>
<line x1="607.2" y1="433.3" x2="616.6" y2="431.8" stroke="#4f93a6" stroke-width="2.6"/>
<line x1="597.9" y1="434.8" x2="600.5" y2="444.5" stroke="#4f93a6" stroke-width="2.6"/>
<line x1="600.5" y1="444.5" x2="603.1" y2="454.2" stroke="#4f93a6" stroke-width="2.6"/>
<line x1="597.9" y1="434.8" x2="591.2" y2="429.6" stroke="#4f93a6" stroke-width="2.6"/>
<line x1="591.2" y1="429.6" x2="584.5" y2="424.4" stroke="#8ccaf0" stroke-width="2.6"/>
<line x1="597.9" y1="434.8" x2="609.5" y2="438.6" stroke="#4f93a6" stroke-width="2.6"/>
<line x1="609.5" y1="438.6" x2="621.1" y2="442.3" stroke="#8a3a4c" stroke-width="2.6"/>
<line x1="607.6" y1="416.9" x2="612.1" y2="424.4" stroke="#4f93a6" stroke-width="2.6"/>
<line x1="612.1" y1="424.4" x2="616.6" y2="431.8" stroke="#4f93a6" stroke-width="2.6"/>
<line x1="607.6" y1="416.9" x2="596.0" y2="420.6" stroke="#4f93a6" stroke-width="2.6"/>
<line x1="596.0" y1="420.6" x2="584.5" y2="424.4" stroke="#8ccaf0" stroke-width="2.6"/>
<line x1="616.6" y1="431.8" x2="609.9" y2="443.0" stroke="#4f93a6" stroke-width="2.6"/>
<line x1="609.9" y1="443.0" x2="603.1" y2="454.2" stroke="#4f93a6" stroke-width="2.6"/>
<line x1="616.6" y1="431.8" x2="628.5" y2="427.4" stroke="#4f93a6" stroke-width="2.6"/>
<line x1="628.5" y1="427.4" x2="640.5" y2="422.9" stroke="#4f93a6" stroke-width="2.6"/>
<line x1="603.1" y1="454.2" x2="600.9" y2="463.9" stroke="#4f93a6" stroke-width="2.6"/>
<line x1="600.9" y1="463.9" x2="598.7" y2="473.7" stroke="#4f93a6" stroke-width="2.6"/>
<line x1="603.1" y1="454.2" x2="612.1" y2="448.2" stroke="#4f93a6" stroke-width="2.6"/>
<line x1="612.1" y1="448.2" x2="621.1" y2="442.3" stroke="#8a3a4c" stroke-width="2.6"/>
<line x1="598.7" y1="473.7" x2="603.2" y2="485.6" stroke="#4f93a6" stroke-width="2.6"/>
<line x1="603.2" y1="485.6" x2="607.6" y2="497.6" stroke="#4f93a6" stroke-width="2.6"/>
<line x1="598.7" y1="473.7" x2="606.9" y2="484.1" stroke="#4f93a6" stroke-width="2.6"/>
<line x1="606.9" y1="484.1" x2="615.0" y2="494.6" stroke="#8ccaf0" stroke-width="2.6"/>
<line x1="583.7" y1="497.6" x2="595.7" y2="497.6" stroke="#4f93a6" stroke-width="2.6"/>
<line x1="595.7" y1="497.6" x2="607.6" y2="497.6" stroke="#4f93a6" stroke-width="2.6"/>
<line x1="583.7" y1="497.6" x2="574.0" y2="505.1" stroke="#4f93a6" stroke-width="2.6"/>
<line x1="574.0" y1="505.1" x2="564.3" y2="512.5" stroke="#8a3a4c" stroke-width="2.6"/>
<line x1="607.6" y1="497.6" x2="613.6" y2="506.6" stroke="#4f93a6" stroke-width="2.6"/>
<line x1="613.6" y1="506.6" x2="619.6" y2="515.5" stroke="#4f93a6" stroke-width="2.6"/>
<line x1="619.6" y1="515.5" x2="629.3" y2="510.2" stroke="#4f93a6" stroke-width="2.6"/>
<line x1="629.3" y1="510.2" x2="639.0" y2="505.0" stroke="#4f93a6" stroke-width="2.6"/>
<line x1="619.6" y1="515.5" x2="617.3" y2="505.1" stroke="#4f93a6" stroke-width="2.6"/>
<line x1="617.3" y1="505.1" x2="615.0" y2="494.6" stroke="#8ccaf0" stroke-width="2.6"/>
<line x1="619.6" y1="515.5" x2="610.6" y2="524.5" stroke="#4f93a6" stroke-width="2.6"/>
<line x1="610.6" y1="524.5" x2="601.6" y2="533.4" stroke="#8ccaf0" stroke-width="2.6"/>
<line x1="639.0" y1="505.0" x2="643.5" y2="514.0" stroke="#4f93a6" stroke-width="2.6"/>
<line x1="643.5" y1="514.0" x2="648.0" y2="523.0" stroke="#4f93a6" stroke-width="2.6"/>
<line x1="639.0" y1="505.0" x2="627.0" y2="499.8" stroke="#4f93a6" stroke-width="2.6"/>
<line x1="627.0" y1="499.8" x2="615.0" y2="494.6" stroke="#8ccaf0" stroke-width="2.6"/>
<line x1="639.0" y1="505.0" x2="651.0" y2="504.2" stroke="#4f93a6" stroke-width="2.6"/>
<line x1="651.0" y1="504.2" x2="662.9" y2="503.5" stroke="#8ccaf0" stroke-width="2.6"/>
<line x1="648.0" y1="523.0" x2="659.2" y2="523.8" stroke="#4f93a6" stroke-width="2.6"/>
<line x1="659.2" y1="523.8" x2="670.4" y2="524.5" stroke="#4f93a6" stroke-width="2.6"/>
<line x1="648.0" y1="523.0" x2="653.2" y2="534.7" stroke="#4f93a6" stroke-width="2.6"/>
<line x1="653.2" y1="534.7" x2="658.4" y2="546.4" stroke="#4f93a6" stroke-width="2.6"/>
<line x1="648.0" y1="523.0" x2="655.5" y2="513.2" stroke="#4f93a6" stroke-width="2.6"/>
<line x1="655.5" y1="513.2" x2="662.9" y2="503.5" stroke="#8ccaf0" stroke-width="2.6"/>
<line x1="568.8" y1="521.5" x2="574.0" y2="530.5" stroke="#4f93a6" stroke-width="2.6"/>
<line x1="574.0" y1="530.5" x2="579.2" y2="539.4" stroke="#4f93a6" stroke-width="2.6"/>
<line x1="568.8" y1="521.5" x2="556.8" y2="527.5" stroke="#4f93a6" stroke-width="2.6"/>
<line x1="556.8" y1="527.5" x2="544.9" y2="533.4" stroke="#4f93a6" stroke-width="2.6"/>
<line x1="579.2" y1="539.4" x2="590.4" y2="536.4" stroke="#4f93a6" stroke-width="2.6"/>
<line x1="590.4" y1="536.4" x2="601.6" y2="533.4" stroke="#8ccaf0" stroke-width="2.6"/>
<line x1="544.9" y1="533.4" x2="539.6" y2="521.5" stroke="#4f93a6" stroke-width="2.6"/>
<line x1="539.6" y1="521.5" x2="534.4" y2="509.5" stroke="#4f93a6" stroke-width="2.6"/>
<line x1="544.9" y1="533.4" x2="533.5" y2="539.2" stroke="#4f93a6" stroke-width="2.6"/>
<line x1="533.5" y1="539.2" x2="522.0" y2="545.0" stroke="#4f93a6" stroke-width="2.6"/>
<line x1="544.9" y1="533.4" x2="537.5" y2="542.1" stroke="#4f93a6" stroke-width="2.6"/>
<line x1="537.5" y1="542.1" x2="530.0" y2="550.9" stroke="#4f93a6" stroke-width="2.6"/>
<line x1="534.4" y1="509.5" x2="522.2" y2="506.9" stroke="#4f93a6" stroke-width="2.6"/>
<line x1="522.2" y1="506.9" x2="510.0" y2="504.3" stroke="#8ccaf0" stroke-width="2.6"/>
<line x1="640.5" y1="422.9" x2="651.0" y2="417.6" stroke="#4f93a6" stroke-width="2.6"/>
<line x1="651.0" y1="417.6" x2="661.4" y2="412.4" stroke="#4f93a6" stroke-width="2.6"/>
<line x1="640.5" y1="422.9" x2="630.8" y2="432.6" stroke="#4f93a6" stroke-width="2.6"/>
<line x1="630.8" y1="432.6" x2="621.1" y2="442.3" stroke="#8a3a4c" stroke-width="2.6"/>
<line x1="661.4" y1="412.4" x2="665.1" y2="422.1" stroke="#4f93a6" stroke-width="2.6"/>
<line x1="665.1" y1="422.1" x2="668.9" y2="431.8" stroke="#4f93a6" stroke-width="2.6"/>
<line x1="661.4" y1="412.4" x2="670.6" y2="412.4" stroke="#4f93a6" stroke-width="2.6"/>
<line x1="670.6" y1="412.4" x2="679.9" y2="412.4" stroke="#4f93a6" stroke-width="2.6"/>
<line x1="668.9" y1="431.8" x2="674.4" y2="422.1" stroke="#4f93a6" stroke-width="2.6"/>
<line x1="674.4" y1="422.1" x2="679.9" y2="412.4" stroke="#4f93a6" stroke-width="2.6"/>
<line x1="668.9" y1="431.8" x2="679.3" y2="429.6" stroke="#4f93a6" stroke-width="2.6"/>
<line x1="679.3" y1="429.6" x2="689.8" y2="427.3" stroke="#8ccaf0" stroke-width="2.6"/>
<line x1="692.8" y1="451.2" x2="705.0" y2="446.0" stroke="#4f93a6" stroke-width="2.6"/>
<line x1="705.0" y1="446.0" x2="717.3" y2="440.8" stroke="#4f93a6" stroke-width="2.6"/>
<line x1="692.8" y1="451.2" x2="691.3" y2="439.2" stroke="#4f93a6" stroke-width="2.6"/>
<line x1="691.3" y1="439.2" x2="689.8" y2="427.3" stroke="#8ccaf0" stroke-width="2.6"/>
<line x1="686.8" y1="509.5" x2="678.6" y2="517.0" stroke="#4f93a6" stroke-width="2.6"/>
<line x1="678.6" y1="517.0" x2="670.4" y2="524.5" stroke="#4f93a6" stroke-width="2.6"/>
<line x1="686.8" y1="509.5" x2="689.0" y2="521.5" stroke="#4f93a6" stroke-width="2.6"/>
<line x1="689.0" y1="521.5" x2="691.3" y2="533.4" stroke="#4f93a6" stroke-width="2.6"/>
<line x1="686.8" y1="509.5" x2="693.1" y2="521.5" stroke="#4f93a6" stroke-width="2.6"/>
<line x1="693.1" y1="521.5" x2="699.4" y2="533.4" stroke="#4f93a6" stroke-width="2.6"/>
<line x1="686.8" y1="509.5" x2="674.8" y2="506.5" stroke="#4f93a6" stroke-width="2.6"/>
<line x1="674.8" y1="506.5" x2="662.9" y2="503.5" stroke="#8ccaf0" stroke-width="2.6"/>
<line x1="670.4" y1="524.5" x2="680.8" y2="529.0" stroke="#4f93a6" stroke-width="2.6"/>
<line x1="680.8" y1="529.0" x2="691.3" y2="533.4" stroke="#4f93a6" stroke-width="2.6"/>
<line x1="670.4" y1="524.5" x2="664.4" y2="535.5" stroke="#4f93a6" stroke-width="2.6"/>
<line x1="664.4" y1="535.5" x2="658.4" y2="546.4" stroke="#4f93a6" stroke-width="2.6"/>
<line x1="670.4" y1="524.5" x2="670.7" y2="534.8" stroke="#4f93a6" stroke-width="2.6"/>
<line x1="670.7" y1="534.8" x2="671.0" y2="545.0" stroke="#4f93a6" stroke-width="2.6"/>
<line x1="670.4" y1="524.5" x2="666.6" y2="514.0" stroke="#4f93a6" stroke-width="2.6"/>
<line x1="666.6" y1="514.0" x2="662.9" y2="503.5" stroke="#8ccaf0" stroke-width="2.6"/>
<line x1="670.4" y1="524.5" x2="659.2" y2="528.2" stroke="#4f93a6" stroke-width="2.6"/>
<line x1="659.2" y1="528.2" x2="648.0" y2="532.0" stroke="#8ccaf0" stroke-width="2.6"/>
<line x1="691.3" y1="533.4" x2="687.5" y2="542.9" stroke="#4f93a6" stroke-width="2.6"/>
<line x1="687.5" y1="542.9" x2="683.8" y2="552.4" stroke="#4f93a6" stroke-width="2.6"/>
<line x1="691.3" y1="533.4" x2="681.1" y2="539.2" stroke="#4f93a6" stroke-width="2.6"/>
<line x1="681.1" y1="539.2" x2="671.0" y2="545.0" stroke="#4f93a6" stroke-width="2.6"/>
<line x1="679.9" y1="412.4" x2="684.8" y2="419.9" stroke="#4f93a6" stroke-width="2.6"/>
<line x1="684.8" y1="419.9" x2="689.8" y2="427.3" stroke="#8ccaf0" stroke-width="2.6"/>
<line x1="679.9" y1="412.4" x2="686.9" y2="404.1" stroke="#4f93a6" stroke-width="2.6"/>
<line x1="686.9" y1="404.1" x2="693.9" y2="395.9" stroke="#8a3a4c" stroke-width="2.6"/>
<line x1="717.3" y1="440.8" x2="725.5" y2="451.2" stroke="#4f93a6" stroke-width="2.6"/>
<line x1="725.5" y1="451.2" x2="733.7" y2="461.7" stroke="#4f93a6" stroke-width="2.6"/>
<line x1="717.3" y1="440.8" x2="727.0" y2="432.6" stroke="#4f93a6" stroke-width="2.6"/>
<line x1="727.0" y1="432.6" x2="736.7" y2="424.4" stroke="#8ccaf0" stroke-width="2.6"/>
<line x1="717.3" y1="440.8" x2="721.0" y2="452.0" stroke="#4f93a6" stroke-width="2.6"/>
<line x1="721.0" y1="452.0" x2="724.8" y2="463.2" stroke="#8ccaf0" stroke-width="2.6"/>
<line x1="723.3" y1="446.8" x2="728.5" y2="454.2" stroke="#4f93a6" stroke-width="2.6"/>
<line x1="728.5" y1="454.2" x2="733.7" y2="461.7" stroke="#4f93a6" stroke-width="2.6"/>
<line x1="723.3" y1="446.8" x2="730.0" y2="435.6" stroke="#4f93a6" stroke-width="2.6"/>
<line x1="730.0" y1="435.6" x2="736.7" y2="424.4" stroke="#8ccaf0" stroke-width="2.6"/>
<line x1="723.3" y1="446.8" x2="724.0" y2="455.0" stroke="#4f93a6" stroke-width="2.6"/>
<line x1="724.0" y1="455.0" x2="724.8" y2="463.2" stroke="#8ccaf0" stroke-width="2.6"/>
<line x1="733.7" y1="461.7" x2="742.7" y2="459.4" stroke="#4f93a6" stroke-width="2.6"/>
<line x1="742.7" y1="459.4" x2="751.6" y2="457.2" stroke="#4f93a6" stroke-width="2.6"/>
<line x1="733.7" y1="461.7" x2="741.9" y2="468.4" stroke="#4f93a6" stroke-width="2.6"/>
<line x1="741.9" y1="468.4" x2="750.1" y2="475.2" stroke="#3f6f7b" stroke-width="2.6"/>
<line x1="759.1" y1="418.4" x2="764.4" y2="425.9" stroke="#4f93a6" stroke-width="2.6"/>
<line x1="764.4" y1="425.9" x2="769.6" y2="433.3" stroke="#4f93a6" stroke-width="2.6"/>
<line x1="759.1" y1="418.4" x2="747.9" y2="421.4" stroke="#4f93a6" stroke-width="2.6"/>
<line x1="747.9" y1="421.4" x2="736.7" y2="424.4" stroke="#8ccaf0" stroke-width="2.6"/>
<line x1="751.6" y1="457.2" x2="750.9" y2="466.2" stroke="#4f93a6" stroke-width="2.6"/>
<line x1="750.9" y1="466.2" x2="750.1" y2="475.2" stroke="#3f6f7b" stroke-width="2.6"/>
<line x1="751.6" y1="457.2" x2="738.2" y2="460.2" stroke="#4f93a6" stroke-width="2.6"/>
<line x1="738.2" y1="460.2" x2="724.8" y2="463.2" stroke="#8ccaf0" stroke-width="2.6"/>
<line x1="699.4" y1="533.4" x2="691.6" y2="542.9" stroke="#4f93a6" stroke-width="2.6"/>
<line x1="691.6" y1="542.9" x2="683.8" y2="552.4" stroke="#4f93a6" stroke-width="2.6"/>
<line x1="699.4" y1="533.4" x2="708.3" y2="523.7" stroke="#4f93a6" stroke-width="2.6"/>
<line x1="708.3" y1="523.7" x2="717.3" y2="514.0" stroke="#8a3a4c" stroke-width="2.6"/>
<line x1="505.6" y1="544.9" x2="505.2" y2="550.9" stroke="#4f93a6" stroke-width="2.6"/>
<line x1="505.2" y1="550.9" x2="504.8" y2="556.9" stroke="#4f93a6" stroke-width="2.6"/>
<line x1="505.6" y1="544.9" x2="513.8" y2="545.0" stroke="#4f93a6" stroke-width="2.6"/>
<line x1="513.8" y1="545.0" x2="522.0" y2="545.0" stroke="#4f93a6" stroke-width="2.6"/>
<line x1="505.6" y1="544.9" x2="517.8" y2="547.9" stroke="#4f93a6" stroke-width="2.6"/>
<line x1="517.8" y1="547.9" x2="530.0" y2="550.9" stroke="#4f93a6" stroke-width="2.6"/>
<line x1="505.6" y1="544.9" x2="500.0" y2="538.5" stroke="#4f93a6" stroke-width="2.6"/>
<line x1="500.0" y1="538.5" x2="494.4" y2="532.0" stroke="#8ccaf0" stroke-width="2.6"/>
<line x1="504.8" y1="556.9" x2="513.4" y2="551.0" stroke="#4f93a6" stroke-width="2.6"/>
<line x1="513.4" y1="551.0" x2="522.0" y2="545.0" stroke="#4f93a6" stroke-width="2.6"/>
<line x1="504.8" y1="556.9" x2="517.4" y2="553.9" stroke="#4f93a6" stroke-width="2.6"/>
<line x1="517.4" y1="553.9" x2="530.0" y2="550.9" stroke="#4f93a6" stroke-width="2.6"/>
<line x1="504.8" y1="556.9" x2="499.6" y2="544.5" stroke="#4f93a6" stroke-width="2.6"/>
<line x1="499.6" y1="544.5" x2="494.4" y2="532.0" stroke="#8ccaf0" stroke-width="2.6"/>
<line x1="504.8" y1="556.9" x2="494.4" y2="560.6" stroke="#4f93a6" stroke-width="2.6"/>
<line x1="494.4" y1="560.6" x2="483.9" y2="564.4" stroke="#8a3a4c" stroke-width="2.6"/>
<line x1="460.0" y1="597.2" x2="471.9" y2="603.2" stroke="#4f93a6" stroke-width="2.6"/>
<line x1="471.9" y1="603.2" x2="483.9" y2="609.2" stroke="#8ccaf0" stroke-width="2.6"/>
<line x1="491.4" y1="631.6" x2="487.6" y2="620.4" stroke="#4f93a6" stroke-width="2.6"/>
<line x1="487.6" y1="620.4" x2="483.9" y2="609.2" stroke="#8ccaf0" stroke-width="2.6"/>
<line x1="521.3" y1="625.6" x2="519.8" y2="633.0" stroke="#4f93a6" stroke-width="2.6"/>
<line x1="519.8" y1="633.0" x2="518.3" y2="640.5" stroke="#4f93a6" stroke-width="2.6"/>
<line x1="521.3" y1="625.6" x2="531.6" y2="620.4" stroke="#4f93a6" stroke-width="2.6"/>
<line x1="531.6" y1="620.4" x2="541.9" y2="615.2" stroke="#4f93a6" stroke-width="2.6"/>
<line x1="521.3" y1="625.6" x2="525.6" y2="636.8" stroke="#4f93a6" stroke-width="2.6"/>
<line x1="525.6" y1="636.8" x2="530.0" y2="648.0" stroke="#3f6f7b" stroke-width="2.6"/>
<line x1="518.3" y1="640.5" x2="524.1" y2="644.2" stroke="#4f93a6" stroke-width="2.6"/>
<line x1="524.1" y1="644.2" x2="530.0" y2="648.0" stroke="#3f6f7b" stroke-width="2.6"/>
<line x1="518.3" y1="640.5" x2="524.1" y2="651.8" stroke="#4f93a6" stroke-width="2.6"/>
<line x1="524.1" y1="651.8" x2="530.0" y2="663.0" stroke="#3f6f7b" stroke-width="2.6"/>
<line x1="622.6" y1="553.9" x2="630.0" y2="561.3" stroke="#4f93a6" stroke-width="2.6"/>
<line x1="630.0" y1="561.3" x2="637.5" y2="568.8" stroke="#8a3a4c" stroke-width="2.6"/>
<line x1="622.6" y1="553.9" x2="633.0" y2="556.9" stroke="#4f93a6" stroke-width="2.6"/>
<line x1="633.0" y1="556.9" x2="643.5" y2="559.9" stroke="#8a3a4c" stroke-width="2.6"/>
<line x1="658.4" y1="546.4" x2="671.1" y2="549.4" stroke="#4f93a6" stroke-width="2.6"/>
<line x1="671.1" y1="549.4" x2="683.8" y2="552.4" stroke="#4f93a6" stroke-width="2.6"/>
<line x1="658.4" y1="546.4" x2="664.7" y2="545.7" stroke="#4f93a6" stroke-width="2.6"/>
<line x1="664.7" y1="545.7" x2="671.0" y2="545.0" stroke="#4f93a6" stroke-width="2.6"/>
<line x1="658.4" y1="546.4" x2="653.2" y2="539.2" stroke="#4f93a6" stroke-width="2.6"/>
<line x1="653.2" y1="539.2" x2="648.0" y2="532.0" stroke="#8ccaf0" stroke-width="2.6"/>
<line x1="658.4" y1="546.4" x2="651.0" y2="553.1" stroke="#4f93a6" stroke-width="2.6"/>
<line x1="651.0" y1="553.1" x2="643.5" y2="559.9" stroke="#8a3a4c" stroke-width="2.6"/>
<line x1="683.8" y1="552.4" x2="670.3" y2="554.6" stroke="#4f93a6" stroke-width="2.6"/>
<line x1="670.3" y1="554.6" x2="656.9" y2="556.9" stroke="#4f93a6" stroke-width="2.6"/>
<line x1="683.8" y1="552.4" x2="677.4" y2="548.7" stroke="#4f93a6" stroke-width="2.6"/>
<line x1="677.4" y1="548.7" x2="671.0" y2="545.0" stroke="#4f93a6" stroke-width="2.6"/>
<line x1="656.9" y1="556.9" x2="664.0" y2="551.0" stroke="#4f93a6" stroke-width="2.6"/>
<line x1="664.0" y1="551.0" x2="671.0" y2="545.0" stroke="#4f93a6" stroke-width="2.6"/>
<line x1="656.9" y1="556.9" x2="652.5" y2="544.5" stroke="#4f93a6" stroke-width="2.6"/>
<line x1="652.5" y1="544.5" x2="648.0" y2="532.0" stroke="#8ccaf0" stroke-width="2.6"/>
<line x1="656.9" y1="556.9" x2="647.2" y2="562.8" stroke="#4f93a6" stroke-width="2.6"/>
<line x1="647.2" y1="562.8" x2="637.5" y2="568.8" stroke="#8a3a4c" stroke-width="2.6"/>
<line x1="656.9" y1="556.9" x2="650.2" y2="558.4" stroke="#4f93a6" stroke-width="2.6"/>
<line x1="650.2" y1="558.4" x2="643.5" y2="559.9" stroke="#8a3a4c" stroke-width="2.6"/>
<line x1="604.6" y1="577.8" x2="608.4" y2="589.0" stroke="#4f93a6" stroke-width="2.6"/>
<line x1="608.4" y1="589.0" x2="612.1" y2="600.2" stroke="#4f93a6" stroke-width="2.6"/>
<line x1="612.1" y1="600.2" x2="624.8" y2="605.5" stroke="#4f93a6" stroke-width="2.6"/>
<line x1="624.8" y1="605.5" x2="637.5" y2="610.7" stroke="#8ccaf0" stroke-width="2.6"/>
<line x1="541.9" y1="615.2" x2="550.1" y2="620.4" stroke="#4f93a6" stroke-width="2.6"/>
<line x1="550.1" y1="620.4" x2="558.3" y2="625.6" stroke="#4f93a6" stroke-width="2.6"/>
<line x1="541.9" y1="615.2" x2="551.6" y2="608.5" stroke="#4f93a6" stroke-width="2.6"/>
<line x1="551.6" y1="608.5" x2="561.3" y2="601.7" stroke="#8a3a4c" stroke-width="2.6"/>
<line x1="558.3" y1="625.6" x2="563.5" y2="637.5" stroke="#4f93a6" stroke-width="2.6"/>
<line x1="563.5" y1="637.5" x2="568.8" y2="649.5" stroke="#4f93a6" stroke-width="2.6"/>
<line x1="558.3" y1="625.6" x2="554.6" y2="633.8" stroke="#4f93a6" stroke-width="2.6"/>
<line x1="554.6" y1="633.8" x2="550.9" y2="642.0" stroke="#8ccaf0" stroke-width="2.6"/>
<line x1="558.3" y1="625.6" x2="559.8" y2="613.7" stroke="#4f93a6" stroke-width="2.6"/>
<line x1="559.8" y1="613.7" x2="561.3" y2="601.7" stroke="#8a3a4c" stroke-width="2.6"/>
<line x1="670.4" y1="643.5" x2="675.9" y2="653.2" stroke="#4f93a6" stroke-width="2.6"/>
<line x1="675.9" y1="653.2" x2="681.4" y2="663.0" stroke="#4f93a6" stroke-width="2.6"/>
<line x1="670.4" y1="643.5" x2="676.3" y2="654.0" stroke="#4f93a6" stroke-width="2.6"/>
<line x1="676.3" y1="654.0" x2="682.3" y2="664.4" stroke="#3f6f7b" stroke-width="2.6"/>
<line x1="670.4" y1="643.5" x2="678.6" y2="633.0" stroke="#4f93a6" stroke-width="2.6"/>
<line x1="678.6" y1="633.0" x2="686.8" y2="622.6" stroke="#8ccaf0" stroke-width="2.6"/>
<line x1="568.8" y1="649.5" x2="559.8" y2="645.8" stroke="#4f93a6" stroke-width="2.6"/>
<line x1="559.8" y1="645.8" x2="550.9" y2="642.0" stroke="#8ccaf0" stroke-width="2.6"/>
<line x1="671.0" y1="545.0" x2="659.5" y2="538.5" stroke="#4f93a6" stroke-width="2.6"/>
<line x1="659.5" y1="538.5" x2="648.0" y2="532.0" stroke="#8ccaf0" stroke-width="2.6"/>
<line x1="723.3" y1="651.0" x2="715.8" y2="660.0" stroke="#4f93a6" stroke-width="2.6"/>
<line x1="715.8" y1="660.0" x2="708.3" y2="668.9" stroke="#4f93a6" stroke-width="2.6"/>
<line x1="723.3" y1="651.0" x2="717.3" y2="639.0" stroke="#4f93a6" stroke-width="2.6"/>
<line x1="717.3" y1="639.0" x2="711.3" y2="627.1" stroke="#3f6f7b" stroke-width="2.6"/>
<line x1="708.3" y1="668.9" x2="694.8" y2="666.0" stroke="#4f93a6" stroke-width="2.6"/>
<line x1="694.8" y1="666.0" x2="681.4" y2="663.0" stroke="#4f93a6" stroke-width="2.6"/>
<line x1="708.3" y1="668.9" x2="695.3" y2="666.6" stroke="#4f93a6" stroke-width="2.6"/>
<line x1="695.3" y1="666.6" x2="682.3" y2="664.4" stroke="#3f6f7b" stroke-width="2.6"/>
<line x1="750.1" y1="475.2" x2="754.6" y2="485.6" stroke="#3f6f7b" stroke-width="2.6"/>
<line x1="754.6" y1="485.6" x2="759.1" y2="496.1" stroke="#3f6f7b" stroke-width="2.6"/>
<line x1="741.2" y1="520.0" x2="729.2" y2="517.0" stroke="#3f6f7b" stroke-width="2.6"/>
<line x1="729.2" y1="517.0" x2="717.3" y2="514.0" stroke="#8a3a4c" stroke-width="2.6"/>
<line x1="530.0" y1="648.0" x2="530.0" y2="655.5" stroke="#3f6f7b" stroke-width="2.6"/>
<line x1="530.0" y1="655.5" x2="530.0" y2="663.0" stroke="#3f6f7b" stroke-width="2.6"/>
<line x1="530.0" y1="648.0" x2="540.5" y2="645.0" stroke="#3f6f7b" stroke-width="2.6"/>
<line x1="540.5" y1="645.0" x2="550.9" y2="642.0" stroke="#8ccaf0" stroke-width="2.6"/>
<line x1="711.3" y1="627.1" x2="699.0" y2="624.9" stroke="#3f6f7b" stroke-width="2.6"/>
<line x1="699.0" y1="624.9" x2="686.8" y2="622.6" stroke="#8ccaf0" stroke-width="2.6"/>
<line x1="500.0" y1="333.8" x2="509.1" y2="350.0" stroke="#8ccaf0" stroke-width="2.6"/>
<line x1="509.1" y1="350.0" x2="518.3" y2="366.2" stroke="#8a8572" stroke-width="2.6"/>
<line x1="549.3" y1="344.0" x2="533.8" y2="355.1" stroke="#8ccaf0" stroke-width="2.6"/>
<line x1="533.8" y1="355.1" x2="518.3" y2="366.2" stroke="#8a8572" stroke-width="2.6"/>
<line x1="587.0" y1="319.0" x2="595.2" y2="327.1" stroke="#8ccaf0" stroke-width="2.6"/>
<line x1="595.2" y1="327.1" x2="603.5" y2="335.2" stroke="#8a8572" stroke-width="2.6"/>
<line x1="652.8" y1="333.8" x2="661.9" y2="350.7" stroke="#8ccaf0" stroke-width="2.6"/>
<line x1="661.9" y1="350.7" x2="671.0" y2="367.6" stroke="#8a8572" stroke-width="2.6"/>
<line x1="702.0" y1="344.6" x2="686.5" y2="356.1" stroke="#8ccaf0" stroke-width="2.6"/>
<line x1="686.5" y1="356.1" x2="671.0" y2="367.6" stroke="#8a8572" stroke-width="2.6"/>
<line x1="460.0" y1="493.0" x2="475.4" y2="481.9" stroke="#8ccaf0" stroke-width="2.6"/>
<line x1="475.4" y1="481.9" x2="490.7" y2="470.7" stroke="#8a8572" stroke-width="2.6"/>
<line x1="510.0" y1="504.3" x2="500.4" y2="487.5" stroke="#8ccaf0" stroke-width="2.6"/>
<line x1="500.4" y1="487.5" x2="490.7" y2="470.7" stroke="#8a8572" stroke-width="2.6"/>
<line x1="510.0" y1="504.3" x2="526.0" y2="493.5" stroke="#8ccaf0" stroke-width="2.6"/>
<line x1="526.0" y1="493.5" x2="541.9" y2="482.6" stroke="#8a8572" stroke-width="2.6"/>
<line x1="449.6" y1="532.0" x2="457.1" y2="538.0" stroke="#8ccaf0" stroke-width="2.6"/>
<line x1="457.1" y1="538.0" x2="464.5" y2="543.9" stroke="#8a8572" stroke-width="2.6"/>
<line x1="494.4" y1="532.0" x2="479.4" y2="538.0" stroke="#8ccaf0" stroke-width="2.6"/>
<line x1="479.4" y1="538.0" x2="464.5" y2="543.9" stroke="#8a8572" stroke-width="2.6"/>
<line x1="571.8" y1="461.7" x2="556.8" y2="472.1" stroke="#8ccaf0" stroke-width="2.6"/>
<line x1="556.8" y1="472.1" x2="541.9" y2="482.6" stroke="#8a8572" stroke-width="2.6"/>
<line x1="615.0" y1="494.6" x2="629.2" y2="483.4" stroke="#8ccaf0" stroke-width="2.6"/>
<line x1="629.2" y1="483.4" x2="643.5" y2="472.2" stroke="#8a8572" stroke-width="2.6"/>
<line x1="662.9" y1="503.5" x2="653.2" y2="487.9" stroke="#8ccaf0" stroke-width="2.6"/>
<line x1="653.2" y1="487.9" x2="643.5" y2="472.2" stroke="#8a8572" stroke-width="2.6"/>
<line x1="662.9" y1="503.5" x2="677.8" y2="493.8" stroke="#8ccaf0" stroke-width="2.6"/>
<line x1="677.8" y1="493.8" x2="692.8" y2="484.1" stroke="#8a8572" stroke-width="2.6"/>
<line x1="689.8" y1="427.3" x2="705.8" y2="418.4" stroke="#8ccaf0" stroke-width="2.6"/>
<line x1="705.8" y1="418.4" x2="721.8" y2="409.4" stroke="#8a8572" stroke-width="2.6"/>
<line x1="601.6" y1="533.4" x2="609.1" y2="538.6" stroke="#8ccaf0" stroke-width="2.6"/>
<line x1="609.1" y1="538.6" x2="616.6" y2="543.9" stroke="#8a8572" stroke-width="2.6"/>
<line x1="648.0" y1="532.0" x2="632.3" y2="538.0" stroke="#8ccaf0" stroke-width="2.6"/>
<line x1="632.3" y1="538.0" x2="616.6" y2="543.9" stroke="#8a8572" stroke-width="2.6"/>
<line x1="736.7" y1="424.4" x2="729.2" y2="416.9" stroke="#8ccaf0" stroke-width="2.6"/>
<line x1="729.2" y1="416.9" x2="721.8" y2="409.4" stroke="#8a8572" stroke-width="2.6"/>
<line x1="724.8" y1="463.2" x2="708.8" y2="473.6" stroke="#8ccaf0" stroke-width="2.6"/>
<line x1="708.8" y1="473.6" x2="692.8" y2="484.1" stroke="#8a8572" stroke-width="2.6"/>
<line x1="483.9" y1="609.2" x2="499.6" y2="598.8" stroke="#8ccaf0" stroke-width="2.6"/>
<line x1="499.6" y1="598.8" x2="515.3" y2="588.3" stroke="#8a8572" stroke-width="2.6"/>
<line x1="637.5" y1="610.7" x2="653.2" y2="600.2" stroke="#8ccaf0" stroke-width="2.6"/>
<line x1="653.2" y1="600.2" x2="668.9" y2="589.8" stroke="#8a8572" stroke-width="2.6"/>
<line x1="686.8" y1="622.6" x2="677.8" y2="606.2" stroke="#8ccaf0" stroke-width="2.6"/>
<line x1="677.8" y1="606.2" x2="668.9" y2="589.8" stroke="#8a8572" stroke-width="2.6"/>
<line x1="550.9" y1="642.0" x2="567.3" y2="631.5" stroke="#8ccaf0" stroke-width="2.6"/>
<line x1="567.3" y1="631.5" x2="583.7" y2="621.1" stroke="#8a8572" stroke-width="2.6"/>
<line x1="518.3" y1="366.2" x2="503.1" y2="375.0" stroke="#8a8572" stroke-width="2.6"/>
<line x1="503.1" y1="375.0" x2="487.9" y2="383.8" stroke="#3fd98f" stroke-width="2.6"/>
<line x1="518.3" y1="366.2" x2="515.6" y2="375.0" stroke="#8a8572" stroke-width="2.6"/>
<line x1="515.6" y1="375.0" x2="512.9" y2="383.8" stroke="#3fd98f" stroke-width="2.6"/>
<line x1="518.3" y1="366.2" x2="533.8" y2="376.4" stroke="#8a8572" stroke-width="2.6"/>
<line x1="533.8" y1="376.4" x2="549.3" y2="386.5" stroke="#8a3a4c" stroke-width="2.6"/>
<line x1="518.3" y1="366.2" x2="529.8" y2="380.4" stroke="#8a8572" stroke-width="2.6"/>
<line x1="529.8" y1="380.4" x2="541.2" y2="394.5" stroke="#8a3a4c" stroke-width="2.6"/>
<line x1="603.5" y1="335.2" x2="600.0" y2="353.4" stroke="#8a8572" stroke-width="2.6"/>
<line x1="600.0" y1="353.4" x2="596.5" y2="371.6" stroke="#3fd98f" stroke-width="2.6"/>
<line x1="603.5" y1="335.2" x2="595.0" y2="318.3" stroke="#8a8572" stroke-width="2.6"/>
<line x1="595.0" y1="318.3" x2="586.4" y2="301.4" stroke="#3fd98f" stroke-width="2.6"/>
<line x1="603.5" y1="335.2" x2="613.6" y2="344.6" stroke="#8a8572" stroke-width="2.6"/>
<line x1="613.6" y1="344.6" x2="623.7" y2="354.1" stroke="#8a3a4c" stroke-width="2.6"/>
<line x1="671.0" y1="367.6" x2="655.8" y2="375.7" stroke="#8a8572" stroke-width="2.6"/>
<line x1="655.8" y1="375.7" x2="640.6" y2="383.8" stroke="#3fd98f" stroke-width="2.6"/>
<line x1="671.0" y1="367.6" x2="668.3" y2="376.4" stroke="#8a8572" stroke-width="2.6"/>
<line x1="668.3" y1="376.4" x2="665.6" y2="385.1" stroke="#3fd98f" stroke-width="2.6"/>
<line x1="671.0" y1="367.6" x2="686.5" y2="377.1" stroke="#8a8572" stroke-width="2.6"/>
<line x1="686.5" y1="377.1" x2="702.0" y2="386.5" stroke="#8a3a4c" stroke-width="2.6"/>
<line x1="671.0" y1="367.6" x2="682.5" y2="381.8" stroke="#8a8572" stroke-width="2.6"/>
<line x1="682.5" y1="381.8" x2="693.9" y2="395.9" stroke="#8a3a4c" stroke-width="2.6"/>
<line x1="490.7" y1="470.7" x2="493.6" y2="461.7" stroke="#8a8572" stroke-width="2.6"/>
<line x1="493.6" y1="461.7" x2="496.6" y2="452.7" stroke="#3fd98f" stroke-width="2.6"/>
<line x1="490.7" y1="470.7" x2="505.6" y2="462.1" stroke="#8a8572" stroke-width="2.6"/>
<line x1="505.6" y1="462.1" x2="520.5" y2="453.5" stroke="#3fd98f" stroke-width="2.6"/>
<line x1="490.7" y1="470.7" x2="503.8" y2="484.1" stroke="#8a8572" stroke-width="2.6"/>
<line x1="503.8" y1="484.1" x2="516.8" y2="497.6" stroke="#3fd98f" stroke-width="2.6"/>
<line x1="490.7" y1="470.7" x2="479.4" y2="456.5" stroke="#8a8572" stroke-width="2.6"/>
<line x1="479.4" y1="456.5" x2="468.2" y2="442.3" stroke="#8a3a4c" stroke-width="2.6"/>
<line x1="464.5" y1="543.9" x2="456.3" y2="529.3" stroke="#8a8572" stroke-width="2.6"/>
<line x1="456.3" y1="529.3" x2="448.1" y2="514.7" stroke="#3fd98f" stroke-width="2.6"/>
<line x1="464.5" y1="543.9" x2="474.2" y2="554.1" stroke="#8a8572" stroke-width="2.6"/>
<line x1="474.2" y1="554.1" x2="483.9" y2="564.4" stroke="#8a3a4c" stroke-width="2.6"/>
<line x1="541.9" y1="482.6" x2="531.2" y2="468.1" stroke="#8a8572" stroke-width="2.6"/>
<line x1="531.2" y1="468.1" x2="520.5" y2="453.5" stroke="#3fd98f" stroke-width="2.6"/>
<line x1="541.9" y1="482.6" x2="529.3" y2="490.1" stroke="#8a8572" stroke-width="2.6"/>
<line x1="529.3" y1="490.1" x2="516.8" y2="497.6" stroke="#3fd98f" stroke-width="2.6"/>
<line x1="541.9" y1="482.6" x2="539.6" y2="491.6" stroke="#8a8572" stroke-width="2.6"/>
<line x1="539.6" y1="491.6" x2="537.4" y2="500.5" stroke="#3fd98f" stroke-width="2.6"/>
<line x1="541.9" y1="482.6" x2="553.1" y2="497.6" stroke="#8a8572" stroke-width="2.6"/>
<line x1="553.1" y1="497.6" x2="564.3" y2="512.5" stroke="#8a3a4c" stroke-width="2.6"/>
<line x1="643.5" y1="472.2" x2="645.8" y2="462.4" stroke="#8a8572" stroke-width="2.6"/>
<line x1="645.8" y1="462.4" x2="648.0" y2="452.7" stroke="#3fd98f" stroke-width="2.6"/>
<line x1="643.5" y1="472.2" x2="659.1" y2="463.2" stroke="#8a8572" stroke-width="2.6"/>
<line x1="659.1" y1="463.2" x2="674.8" y2="454.2" stroke="#3fd98f" stroke-width="2.6"/>
<line x1="643.5" y1="472.2" x2="654.7" y2="486.4" stroke="#8a8572" stroke-width="2.6"/>
<line x1="654.7" y1="486.4" x2="665.9" y2="500.5" stroke="#3fd98f" stroke-width="2.6"/>
<line x1="643.5" y1="472.2" x2="632.3" y2="457.2" stroke="#8a8572" stroke-width="2.6"/>
<line x1="632.3" y1="457.2" x2="621.1" y2="442.3" stroke="#8a3a4c" stroke-width="2.6"/>
<line x1="692.8" y1="484.1" x2="683.8" y2="469.1" stroke="#8a8572" stroke-width="2.6"/>
<line x1="683.8" y1="469.1" x2="674.8" y2="454.2" stroke="#3fd98f" stroke-width="2.6"/>
<line x1="692.8" y1="484.1" x2="679.3" y2="492.3" stroke="#8a8572" stroke-width="2.6"/>
<line x1="679.3" y1="492.3" x2="665.9" y2="500.5" stroke="#3fd98f" stroke-width="2.6"/>
<line x1="692.8" y1="484.1" x2="690.5" y2="492.3" stroke="#8a8572" stroke-width="2.6"/>
<line x1="690.5" y1="492.3" x2="688.3" y2="500.5" stroke="#3fd98f" stroke-width="2.6"/>
<line x1="692.8" y1="484.1" x2="705.0" y2="499.1" stroke="#8a8572" stroke-width="2.6"/>
<line x1="705.0" y1="499.1" x2="717.3" y2="514.0" stroke="#8a3a4c" stroke-width="2.6"/>
<line x1="616.6" y1="543.9" x2="608.8" y2="529.7" stroke="#8a8572" stroke-width="2.6"/>
<line x1="608.8" y1="529.7" x2="600.9" y2="515.5" stroke="#3fd98f" stroke-width="2.6"/>
<line x1="616.6" y1="543.9" x2="627.0" y2="556.3" stroke="#8a8572" stroke-width="2.6"/>
<line x1="627.0" y1="556.3" x2="637.5" y2="568.8" stroke="#8a3a4c" stroke-width="2.6"/>
<line x1="616.6" y1="543.9" x2="630.0" y2="551.9" stroke="#8a8572" stroke-width="2.6"/>
<line x1="630.0" y1="551.9" x2="643.5" y2="559.9" stroke="#8a3a4c" stroke-width="2.6"/>
<line x1="721.8" y1="409.4" x2="730.8" y2="425.1" stroke="#8a8572" stroke-width="2.6"/>
<line x1="730.8" y1="425.1" x2="739.7" y2="440.8" stroke="#3fd98f" stroke-width="2.6"/>
<line x1="721.8" y1="409.4" x2="711.9" y2="397.9" stroke="#8a8572" stroke-width="2.6"/>
<line x1="711.9" y1="397.9" x2="702.0" y2="386.5" stroke="#8a3a4c" stroke-width="2.6"/>
<line x1="721.8" y1="409.4" x2="707.8" y2="402.6" stroke="#8a8572" stroke-width="2.6"/>
<line x1="707.8" y1="402.6" x2="693.9" y2="395.9" stroke="#8a3a4c" stroke-width="2.6"/>
<line x1="515.3" y1="588.3" x2="517.9" y2="578.5" stroke="#8a8572" stroke-width="2.6"/>
<line x1="517.9" y1="578.5" x2="520.5" y2="568.8" stroke="#3fd98f" stroke-width="2.6"/>
<line x1="515.3" y1="588.3" x2="530.5" y2="579.7" stroke="#8a8572" stroke-width="2.6"/>
<line x1="530.5" y1="579.7" x2="545.6" y2="571.1" stroke="#3fd98f" stroke-width="2.6"/>
<line x1="515.3" y1="588.3" x2="499.6" y2="576.3" stroke="#8a8572" stroke-width="2.6"/>
<line x1="499.6" y1="576.3" x2="483.9" y2="564.4" stroke="#8a3a4c" stroke-width="2.6"/>
<line x1="583.7" y1="621.1" x2="586.7" y2="602.5" stroke="#8a8572" stroke-width="2.6"/>
<line x1="586.7" y1="602.5" x2="589.7" y2="583.8" stroke="#3fd98f" stroke-width="2.6"/>
<line x1="583.7" y1="621.1" x2="572.5" y2="611.4" stroke="#8a8572" stroke-width="2.6"/>
<line x1="572.5" y1="611.4" x2="561.3" y2="601.7" stroke="#8a3a4c" stroke-width="2.6"/>
<line x1="668.9" y1="589.8" x2="671.5" y2="580.5" stroke="#8a8572" stroke-width="2.6"/>
<line x1="671.5" y1="580.5" x2="674.1" y2="571.1" stroke="#3fd98f" stroke-width="2.6"/>
<line x1="668.9" y1="589.8" x2="681.6" y2="580.8" stroke="#8a8572" stroke-width="2.6"/>
<line x1="681.6" y1="580.8" x2="694.3" y2="571.8" stroke="#3fd98f" stroke-width="2.6"/>
<line x1="668.9" y1="589.8" x2="653.2" y2="579.3" stroke="#8a8572" stroke-width="2.6"/>
<line x1="653.2" y1="579.3" x2="637.5" y2="568.8" stroke="#8a3a4c" stroke-width="2.6"/>
<line x1="668.9" y1="589.8" x2="656.2" y2="574.8" stroke="#8a8572" stroke-width="2.6"/>
<line x1="656.2" y1="574.8" x2="643.5" y2="559.9" stroke="#8a3a4c" stroke-width="2.6"/>
<circle cx="477.8" cy="286.6" r="8.2" fill="url(#gG)"/>
<circle cx="502.8" cy="292.7" r="8.2" fill="url(#gG)"/>
<circle cx="463.6" cy="304.8" r="8.2" fill="url(#gG)"/>
<circle cx="513.5" cy="315.6" r="8.2" fill="url(#gG)"/>
<circle cx="666.9" cy="314.9" r="8.2" fill="url(#gG)"/>
<circle cx="656.0" cy="296.0" r="8.2" fill="url(#gG)"/>
<circle cx="627.8" cy="326.0" r="8.2" fill="url(#gG)"/>
<circle cx="559.8" cy="666.0" r="8.2" fill="url(#gG)"/>
<circle cx="594.2" cy="674.9" r="8.2" fill="url(#gG)"/>
<circle cx="618.1" cy="668.9" r="8.2" fill="url(#gG)"/>
<circle cx="475.8" cy="327.8" r="8" fill="url(#gC)"/>
<circle cx="541.2" cy="323.0" r="8" fill="url(#gC)"/>
<circle cx="564.8" cy="323.7" r="8" fill="url(#gC)"/>
<circle cx="568.9" cy="286.6" r="8" fill="url(#gC)"/>
<circle cx="554.7" cy="309.5" r="8" fill="url(#gC)"/>
<circle cx="592.5" cy="278.5" r="8" fill="url(#gC)"/>
<circle cx="574.3" cy="355.4" r="8" fill="url(#gC)"/>
<circle cx="582.4" cy="378.4" r="8" fill="url(#gC)"/>
<circle cx="564.8" cy="401.3" r="8" fill="url(#gC)"/>
<circle cx="527.0" cy="400.0" r="8" fill="url(#gC)"/>
<circle cx="500.0" cy="402.6" r="8" fill="url(#gC)"/>
<circle cx="602.1" cy="294.7" r="8" fill="url(#gC)"/>
<circle cx="644.0" cy="342.0" r="8" fill="url(#gC)"/>
<circle cx="664.9" cy="331.1" r="8" fill="url(#gC)"/>
<circle cx="694.6" cy="324.4" r="8" fill="url(#gC)"/>
<circle cx="726.3" cy="358.1" r="8" fill="url(#gC)"/>
<circle cx="735.1" cy="379.7" r="8" fill="url(#gC)"/>
<circle cx="654.8" cy="401.3" r="8" fill="url(#gC)"/>
<circle cx="681.8" cy="398.6" r="8" fill="url(#gC)"/>
<circle cx="716.9" cy="401.3" r="8" fill="url(#gC)"/>
<circle cx="621.0" cy="292.0" r="8" fill="url(#gC)"/>
<circle cx="641.3" cy="319.0" r="8" fill="url(#gC)"/>
<circle cx="445.1" cy="436.3" r="8" fill="url(#gC)"/>
<circle cx="427.9" cy="458.7" r="8" fill="url(#gC)"/>
<circle cx="435.4" cy="480.4" r="8" fill="url(#gC)"/>
<circle cx="430.9" cy="499.8" r="8" fill="url(#gC)"/>
<circle cx="416.7" cy="521.5" r="8" fill="url(#gC)"/>
<circle cx="426.4" cy="535.7" r="8" fill="url(#gC)"/>
<circle cx="486.9" cy="422.1" r="8" fill="url(#gC)"/>
<circle cx="509.3" cy="410.9" r="8" fill="url(#gC)"/>
<circle cx="516.8" cy="433.3" r="8" fill="url(#gC)"/>
<circle cx="498.9" cy="443.8" r="8" fill="url(#gC)"/>
<circle cx="486.2" cy="503.5" r="8" fill="url(#gC)"/>
<circle cx="466.7" cy="514.7" r="8" fill="url(#gC)"/>
<circle cx="495.9" cy="525.2" r="8" fill="url(#gC)"/>
<circle cx="516.8" cy="521.5" r="8" fill="url(#gC)"/>
<circle cx="463.0" cy="508.0" r="8" fill="url(#gC)"/>
<circle cx="527.0" cy="410.9" r="8" fill="url(#gC)"/>
<circle cx="544.9" cy="449.8" r="8" fill="url(#gC)"/>
<circle cx="564.3" cy="439.3" r="8" fill="url(#gC)"/>
<circle cx="571.8" cy="445.3" r="8" fill="url(#gC)"/>
<circle cx="580.0" cy="460.2" r="8" fill="url(#gC)"/>
<circle cx="597.9" cy="434.8" r="8" fill="url(#gC)"/>
<circle cx="607.6" cy="416.9" r="8" fill="url(#gC)"/>
<circle cx="616.6" cy="431.8" r="8" fill="url(#gC)"/>
<circle cx="603.1" cy="454.2" r="8" fill="url(#gC)"/>
<circle cx="598.7" cy="473.7" r="8" fill="url(#gC)"/>
<circle cx="583.7" cy="497.6" r="8" fill="url(#gC)"/>
<circle cx="607.6" cy="497.6" r="8" fill="url(#gC)"/>
<circle cx="619.6" cy="515.5" r="8" fill="url(#gC)"/>
<circle cx="639.0" cy="505.0" r="8" fill="url(#gC)"/>
<circle cx="648.0" cy="523.0" r="8" fill="url(#gC)"/>
<circle cx="568.8" cy="521.5" r="8" fill="url(#gC)"/>
<circle cx="579.2" cy="539.4" r="8" fill="url(#gC)"/>
<circle cx="544.9" cy="533.4" r="8" fill="url(#gC)"/>
<circle cx="534.4" cy="509.5" r="8" fill="url(#gC)"/>
<circle cx="640.5" cy="422.9" r="8" fill="url(#gC)"/>
<circle cx="661.4" cy="412.4" r="8" fill="url(#gC)"/>
<circle cx="668.9" cy="431.8" r="8" fill="url(#gC)"/>
<circle cx="692.8" cy="451.2" r="8" fill="url(#gC)"/>
<circle cx="686.8" cy="509.5" r="8" fill="url(#gC)"/>
<circle cx="670.4" cy="524.5" r="8" fill="url(#gC)"/>
<circle cx="691.3" cy="533.4" r="8" fill="url(#gC)"/>
<circle cx="679.9" cy="412.4" r="8" fill="url(#gC)"/>
<circle cx="717.3" cy="440.8" r="8" fill="url(#gC)"/>
<circle cx="723.3" cy="446.8" r="8" fill="url(#gC)"/>
<circle cx="733.7" cy="461.7" r="8" fill="url(#gC)"/>
<circle cx="759.1" cy="418.4" r="8" fill="url(#gC)"/>
<circle cx="769.6" cy="433.3" r="8" fill="url(#gC)"/>
<circle cx="751.6" cy="457.2" r="8" fill="url(#gC)"/>
<circle cx="699.4" cy="533.4" r="8" fill="url(#gC)"/>
<circle cx="505.6" cy="544.9" r="8" fill="url(#gC)"/>
<circle cx="504.8" cy="556.9" r="8" fill="url(#gC)"/>
<circle cx="522.0" cy="545.0" r="8" fill="url(#gC)"/>
<circle cx="460.0" cy="597.2" r="8" fill="url(#gC)"/>
<circle cx="491.4" cy="631.6" r="8" fill="url(#gC)"/>
<circle cx="521.3" cy="625.6" r="8" fill="url(#gC)"/>
<circle cx="518.3" cy="640.5" r="8" fill="url(#gC)"/>
<circle cx="530.0" cy="550.9" r="8" fill="url(#gC)"/>
<circle cx="622.6" cy="553.9" r="8" fill="url(#gC)"/>
<circle cx="658.4" cy="546.4" r="8" fill="url(#gC)"/>
<circle cx="683.8" cy="552.4" r="8" fill="url(#gC)"/>
<circle cx="656.9" cy="556.9" r="8" fill="url(#gC)"/>
<circle cx="604.6" cy="577.8" r="8" fill="url(#gC)"/>
<circle cx="612.1" cy="600.2" r="8" fill="url(#gC)"/>
<circle cx="541.9" cy="615.2" r="8" fill="url(#gC)"/>
<circle cx="558.3" cy="625.6" r="8" fill="url(#gC)"/>
<circle cx="670.4" cy="643.5" r="8" fill="url(#gC)"/>
<circle cx="568.8" cy="649.5" r="8" fill="url(#gC)"/>
<circle cx="671.0" cy="545.0" r="8" fill="url(#gC)"/>
<circle cx="723.3" cy="651.0" r="8" fill="url(#gC)"/>
<circle cx="708.3" cy="668.9" r="8" fill="url(#gC)"/>
<circle cx="681.4" cy="663.0" r="8" fill="url(#gC)"/>
<circle cx="750.1" cy="475.2" r="8" fill="url(#gD)"/>
<circle cx="759.1" cy="496.1" r="8" fill="url(#gD)"/>
<circle cx="741.2" cy="520.0" r="8" fill="url(#gD)"/>
<circle cx="530.0" cy="648.0" r="8" fill="url(#gD)"/>
<circle cx="530.0" cy="663.0" r="8" fill="url(#gD)"/>
<circle cx="682.3" cy="664.4" r="8" fill="url(#gD)"/>
<circle cx="711.3" cy="627.1" r="8" fill="url(#gD)"/>
<circle cx="500.0" cy="333.8" r="7.2" fill="url(#gN)"/>
<circle cx="549.3" cy="344.0" r="7.2" fill="url(#gN)"/>
<circle cx="587.0" cy="319.0" r="7.2" fill="url(#gN)"/>
<circle cx="652.8" cy="333.8" r="7.2" fill="url(#gN)"/>
<circle cx="702.0" cy="344.6" r="7.2" fill="url(#gN)"/>
<circle cx="460.0" cy="493.0" r="7.2" fill="url(#gN)"/>
<circle cx="510.0" cy="504.3" r="7.2" fill="url(#gN)"/>
<circle cx="449.6" cy="532.0" r="7.2" fill="url(#gN)"/>
<circle cx="494.4" cy="532.0" r="7.2" fill="url(#gN)"/>
<circle cx="537.4" cy="427.3" r="7.2" fill="url(#gN)"/>
<circle cx="584.5" cy="424.4" r="7.2" fill="url(#gN)"/>
<circle cx="571.8" cy="461.7" r="7.2" fill="url(#gN)"/>
<circle cx="615.0" cy="494.6" r="7.2" fill="url(#gN)"/>
<circle cx="662.9" cy="503.5" r="7.2" fill="url(#gN)"/>
<circle cx="689.8" cy="427.3" r="7.2" fill="url(#gN)"/>
<circle cx="601.6" cy="533.4" r="7.2" fill="url(#gN)"/>
<circle cx="648.0" cy="532.0" r="7.2" fill="url(#gN)"/>
<circle cx="736.7" cy="424.4" r="7.2" fill="url(#gN)"/>
<circle cx="724.8" cy="463.2" r="7.2" fill="url(#gN)"/>
<circle cx="483.9" cy="609.2" r="7.2" fill="url(#gN)"/>
<circle cx="637.5" cy="610.7" r="7.2" fill="url(#gN)"/>
<circle cx="686.8" cy="622.6" r="7.2" fill="url(#gN)"/>
<circle cx="550.9" cy="642.0" r="7.2" fill="url(#gN)"/>
<circle cx="518.3" cy="366.2" r="7" fill="url(#gM)"/>
<circle cx="603.5" cy="335.2" r="7" fill="url(#gM)"/>
<circle cx="671.0" cy="367.6" r="7" fill="url(#gM)"/>
<circle cx="490.7" cy="470.7" r="7" fill="url(#gM)"/>
<circle cx="464.5" cy="543.9" r="7" fill="url(#gM)"/>
<circle cx="541.9" cy="482.6" r="7" fill="url(#gM)"/>
<circle cx="643.5" cy="472.2" r="7" fill="url(#gM)"/>
<circle cx="692.8" cy="484.1" r="7" fill="url(#gM)"/>
<circle cx="616.6" cy="543.9" r="7" fill="url(#gM)"/>
<circle cx="721.8" cy="409.4" r="7" fill="url(#gM)"/>
<circle cx="515.3" cy="588.3" r="7" fill="url(#gM)"/>
<circle cx="583.7" cy="621.1" r="7" fill="url(#gM)"/>
<circle cx="668.9" cy="589.8" r="7" fill="url(#gM)"/>
<circle cx="487.9" cy="383.8" r="7.8" fill="url(#gL)"/>
<circle cx="512.9" cy="383.8" r="7.8" fill="url(#gL)"/>
<circle cx="575.0" cy="370.3" r="7.8" fill="url(#gL)"/>
<circle cx="596.5" cy="371.6" r="7.8" fill="url(#gL)"/>
<circle cx="586.4" cy="301.4" r="7.8" fill="url(#gL)"/>
<circle cx="640.6" cy="383.8" r="7.8" fill="url(#gL)"/>
<circle cx="665.6" cy="385.1" r="7.8" fill="url(#gL)"/>
<circle cx="748.9" cy="372.3" r="7.8" fill="url(#gL)"/>
<circle cx="496.6" cy="452.7" r="7.8" fill="url(#gL)"/>
<circle cx="520.5" cy="453.5" r="7.8" fill="url(#gL)"/>
<circle cx="448.1" cy="514.7" r="7.8" fill="url(#gL)"/>
<circle cx="516.8" cy="497.6" r="7.8" fill="url(#gL)"/>
<circle cx="537.4" cy="500.5" r="7.8" fill="url(#gL)"/>
<circle cx="585.2" cy="439.3" r="7.8" fill="url(#gL)"/>
<circle cx="648.0" cy="452.7" r="7.8" fill="url(#gL)"/>
<circle cx="674.8" cy="454.2" r="7.8" fill="url(#gL)"/>
<circle cx="600.9" cy="515.5" r="7.8" fill="url(#gL)"/>
<circle cx="665.9" cy="500.5" r="7.8" fill="url(#gL)"/>
<circle cx="688.3" cy="500.5" r="7.8" fill="url(#gL)"/>
<circle cx="739.7" cy="440.8" r="7.8" fill="url(#gL)"/>
<circle cx="520.5" cy="568.8" r="7.8" fill="url(#gL)"/>
<circle cx="437.6" cy="586.8" r="7.8" fill="url(#gL)"/>
<circle cx="545.6" cy="571.1" r="7.8" fill="url(#gL)"/>
<circle cx="589.7" cy="583.8" r="7.8" fill="url(#gL)"/>
<circle cx="610.6" cy="586.0" r="7.8" fill="url(#gL)"/>
<circle cx="674.1" cy="571.1" r="7.8" fill="url(#gL)"/>
<circle cx="694.3" cy="571.8" r="7.8" fill="url(#gL)"/>
<circle cx="549.3" cy="386.5" r="7" fill="url(#gO)"/>
<circle cx="541.2" cy="394.5" r="7" fill="url(#gO)"/>
<circle cx="623.7" cy="354.1" r="7" fill="url(#gO)"/>
<circle cx="702.0" cy="386.5" r="7" fill="url(#gO)"/>
<circle cx="693.9" cy="395.9" r="7" fill="url(#gO)"/>
<circle cx="468.2" cy="442.3" r="7" fill="url(#gO)"/>
<circle cx="564.3" cy="512.5" r="7" fill="url(#gO)"/>
<circle cx="621.1" cy="442.3" r="7" fill="url(#gO)"/>
<circle cx="717.3" cy="514.0" r="7" fill="url(#gO)"/>
<circle cx="483.9" cy="564.4" r="7" fill="url(#gO)"/>
<circle cx="561.3" cy="601.7" r="7" fill="url(#gO)"/>
<circle cx="637.5" cy="568.8" r="7" fill="url(#gO)"/>
<circle cx="643.5" cy="559.9" r="7" fill="url(#gO)"/>
<line x1="491.3" y1="275.2" x2="721.6" y2="277.2" stroke="#0a2af2" stroke-width="1.7" stroke-linecap="round"/>
<line x1="721.6" y1="277.2" x2="767.5" y2="309.6" stroke="#0a2af2" stroke-width="1.7" stroke-linecap="round"/>
<line x1="767.5" y1="309.6" x2="828.8" y2="417.8" stroke="#0a2af2" stroke-width="1.7" stroke-linecap="round"/>
<line x1="828.8" y1="417.8" x2="837.7" y2="459.3" stroke="#0a2af2" stroke-width="1.7" stroke-linecap="round"/>
<line x1="837.7" y1="459.3" x2="790.2" y2="596" stroke="#0a2af2" stroke-width="1.7" stroke-linecap="round"/>
<line x1="790.2" y1="596" x2="762.8" y2="641" stroke="#0a2af2" stroke-width="1.7" stroke-linecap="round"/>
<line x1="762.8" y1="641" x2="695.3" y2="680.9" stroke="#0a2af2" stroke-width="1.7" stroke-linecap="round"/>
<line x1="695.3" y1="680.9" x2="464" y2="678.7" stroke="#0a2af2" stroke-width="1.7" stroke-linecap="round"/>
<line x1="464" y1="678.7" x2="417.8" y2="647.2" stroke="#0a2af2" stroke-width="1.7" stroke-linecap="round"/>
<line x1="417.8" y1="647.2" x2="357" y2="539" stroke="#0a2af2" stroke-width="1.7" stroke-linecap="round"/>
<line x1="357" y1="539" x2="348.5" y2="496.5" stroke="#0a2af2" stroke-width="1.7" stroke-linecap="round"/>
<line x1="348.5" y1="496.5" x2="397.1" y2="356" stroke="#0a2af2" stroke-width="1.7" stroke-linecap="round"/>
<line x1="397.1" y1="356" x2="423.2" y2="315.8" stroke="#0a2af2" stroke-width="1.7" stroke-linecap="round"/>
<line x1="423.2" y1="315.8" x2="491.3" y2="275.2" stroke="#0a2af2" stroke-width="1.7" stroke-linecap="round"/>
<line x1="423.2" y1="315.8" x2="421.1" y2="334.8" stroke="#0a2af2" stroke-width="1.7" stroke-linecap="round"/>
<line x1="421.1" y1="334.8" x2="452.8" y2="356.6" stroke="#0a2af2" stroke-width="1.7" stroke-linecap="round"/>
<line x1="421.1" y1="334.8" x2="397.1" y2="356" stroke="#0a2af2" stroke-width="1.7" stroke-linecap="round"/>
<line x1="452.8" y1="356.6" x2="684.2" y2="359.1" stroke="#0a2af2" stroke-width="1.7" stroke-linecap="round"/>
<line x1="684.2" y1="359.1" x2="727.3" y2="435" stroke="#0a2af2" stroke-width="1.7" stroke-linecap="round"/>
<line x1="727.3" y1="435" x2="734.5" y2="497.5" stroke="#0a2af2" stroke-width="1.7" stroke-linecap="round"/>
<line x1="734.5" y1="497.5" x2="686.1" y2="638.3" stroke="#0a2af2" stroke-width="1.7" stroke-linecap="round"/>
<line x1="686.1" y1="638.3" x2="455" y2="636" stroke="#0a2af2" stroke-width="1.7" stroke-linecap="round"/>
<line x1="455" y1="636" x2="394" y2="528" stroke="#0a2af2" stroke-width="1.7" stroke-linecap="round"/>
<line x1="394" y1="528" x2="452.8" y2="356.6" stroke="#0a2af2" stroke-width="1.7" stroke-linecap="round"/>
<line x1="684.2" y1="359.1" x2="767.5" y2="309.6" stroke="#0a2af2" stroke-width="1.7" stroke-linecap="round"/>
<line x1="734.5" y1="497.5" x2="767.4" y2="452.8" stroke="#0a2af2" stroke-width="1.7" stroke-linecap="round"/>
<line x1="767.4" y1="452.8" x2="828.8" y2="417.8" stroke="#0a2af2" stroke-width="1.7" stroke-linecap="round"/>
<line x1="727.3" y1="435" x2="767.4" y2="452.8" stroke="#0a2af2" stroke-width="1.7" stroke-linecap="round"/>
<line x1="686.1" y1="638.3" x2="695.3" y2="680.9" stroke="#0a2af2" stroke-width="1.7" stroke-linecap="round"/>
<line x1="455" y1="636" x2="464" y2="678.7" stroke="#0a2af2" stroke-width="1.7" stroke-linecap="round"/>
<line x1="348.5" y1="496.5" x2="394" y2="528" stroke="#0a2af2" stroke-width="1.7" stroke-linecap="round"/>
<line x1="394" y1="528" x2="357" y2="539" stroke="#0a2af2" stroke-width="1.7" stroke-linecap="round"/>
<g font-family="Liberation Sans" font-size="27">
<text x="611.3" y="300.1" textLength="60.1" lengthAdjust="spacingAndGlyphs" fill="#fff" stroke="#fff" stroke-width="4.2" stroke-linejoin="round">(002)</text>
<text x="611.3" y="300.1" textLength="60.1" lengthAdjust="spacingAndGlyphs" fill="#000" stroke="#000" stroke-width="0.25">(002)</text>
<text x="588.5" y="320.9" textLength="66.3" lengthAdjust="spacingAndGlyphs" fill="#fff" stroke="#fff" stroke-width="4.2" stroke-linejoin="round">(0-11)</text>
<text x="588.5" y="320.9" textLength="66.3" lengthAdjust="spacingAndGlyphs" fill="#000" stroke="#000" stroke-width="0.25">(0-11)</text>
<text x="413.7" y="336.5" textLength="74.6" lengthAdjust="spacingAndGlyphs" fill="#fff" stroke="#fff" stroke-width="4.2" stroke-linejoin="round">(-1-11)</text>
<text x="413.7" y="336.5" textLength="74.6" lengthAdjust="spacingAndGlyphs" fill="#000" stroke="#000" stroke-width="0.25">(-1-11)</text>
<text x="777.0" y="370.5" textLength="60.0" lengthAdjust="spacingAndGlyphs" fill="#fff" stroke="#fff" stroke-width="4.2" stroke-linejoin="round">(101)</text>
<text x="777.0" y="370.5" textLength="60.0" lengthAdjust="spacingAndGlyphs" fill="#000" stroke="#000" stroke-width="0.25">(101)</text>
<text x="754.3" y="387.1" textLength="68.3" lengthAdjust="spacingAndGlyphs" fill="#fff" stroke="#fff" stroke-width="4.2" stroke-linejoin="round">(1-10)</text>
<text x="754.3" y="387.1" textLength="68.3" lengthAdjust="spacingAndGlyphs" fill="#000" stroke="#000" stroke-width="0.25">(1-10)</text>
<text x="425.0" y="407.8" textLength="66.2" lengthAdjust="spacingAndGlyphs" fill="#fff" stroke="#fff" stroke-width="4.2" stroke-linejoin="round">(-101)</text>
<text x="425.0" y="407.8" textLength="66.2" lengthAdjust="spacingAndGlyphs" fill="#000" stroke="#000" stroke-width="0.25">(-101)</text>
<text x="400.0" y="428.5" textLength="76.7" lengthAdjust="spacingAndGlyphs" fill="#fff" stroke="#fff" stroke-width="4.2" stroke-linejoin="round">(-1-10)</text>
<text x="400.0" y="428.5" textLength="76.7" lengthAdjust="spacingAndGlyphs" fill="#000" stroke="#000" stroke-width="0.25">(-1-10)</text>
<text x="619.8" y="460.8" textLength="55.1" lengthAdjust="spacingAndGlyphs" fill="#fff" stroke="#fff" stroke-width="4.2" stroke-linejoin="round">(011)</text>
<text x="619.8" y="460.8" textLength="55.1" lengthAdjust="spacingAndGlyphs" fill="#000" stroke="#000" stroke-width="0.25">(011)</text>
<text x="739.7" y="461.7" textLength="76.7" lengthAdjust="spacingAndGlyphs" fill="#fff" stroke="#fff" stroke-width="4.2" stroke-linejoin="round">(1-1-1)</text>
<text x="739.7" y="461.7" textLength="76.7" lengthAdjust="spacingAndGlyphs" fill="#000" stroke="#000" stroke-width="0.25">(1-1-1)</text>
<text x="445.6" y="492.8" textLength="64.2" lengthAdjust="spacingAndGlyphs" fill="#fff" stroke="#fff" stroke-width="4.2" stroke-linejoin="round">(-111)</text>
<text x="445.6" y="492.8" textLength="64.2" lengthAdjust="spacingAndGlyphs" fill="#000" stroke="#000" stroke-width="0.25">(-111)</text>
<text x="569.6" y="499.7" textLength="75.2" lengthAdjust="spacingAndGlyphs" fill="#fff" stroke="#fff" stroke-width="4.2" stroke-linejoin="round">(0-1-1)</text>
<text x="569.6" y="499.7" textLength="75.2" lengthAdjust="spacingAndGlyphs" fill="#000" stroke="#000" stroke-width="0.25">(0-1-1)</text>
<text x="785.3" y="528.0" textLength="55.9" lengthAdjust="spacingAndGlyphs" fill="#fff" stroke="#fff" stroke-width="4.2" stroke-linejoin="round">(110)</text>
<text x="785.3" y="528.0" textLength="55.9" lengthAdjust="spacingAndGlyphs" fill="#000" stroke="#000" stroke-width="0.25">(110)</text>
<text x="760.5" y="548.7" textLength="68.3" lengthAdjust="spacingAndGlyphs" fill="#fff" stroke="#fff" stroke-width="4.2" stroke-linejoin="round">(10-1)</text>
<text x="760.5" y="548.7" textLength="68.3" lengthAdjust="spacingAndGlyphs" fill="#000" stroke="#000" stroke-width="0.25">(10-1)</text>
<text x="429.0" y="569.4" textLength="66.3" lengthAdjust="spacingAndGlyphs" fill="#fff" stroke="#fff" stroke-width="4.2" stroke-linejoin="round">(-110)</text>
<text x="429.0" y="569.4" textLength="66.3" lengthAdjust="spacingAndGlyphs" fill="#000" stroke="#000" stroke-width="0.25">(-110)</text>
<text x="406.3" y="588.0" textLength="78.7" lengthAdjust="spacingAndGlyphs" fill="#fff" stroke="#fff" stroke-width="4.2" stroke-linejoin="round">(-10-1)</text>
<text x="406.3" y="588.0" textLength="78.7" lengthAdjust="spacingAndGlyphs" fill="#000" stroke="#000" stroke-width="0.25">(-10-1)</text>
<text x="772.9" y="621.5" textLength="64.1" lengthAdjust="spacingAndGlyphs" fill="#fff" stroke="#fff" stroke-width="4.2" stroke-linejoin="round">(11-1)</text>
<text x="772.9" y="621.5" textLength="64.1" lengthAdjust="spacingAndGlyphs" fill="#000" stroke="#000" stroke-width="0.25">(11-1)</text>
<text x="598.9" y="637.8" textLength="66.3" lengthAdjust="spacingAndGlyphs" fill="#fff" stroke="#fff" stroke-width="4.2" stroke-linejoin="round">(01-1)</text>
<text x="598.9" y="637.8" textLength="66.3" lengthAdjust="spacingAndGlyphs" fill="#000" stroke="#000" stroke-width="0.25">(01-1)</text>
<text x="574.0" y="658.5" textLength="68.4" lengthAdjust="spacingAndGlyphs" fill="#fff" stroke="#fff" stroke-width="4.2" stroke-linejoin="round">(00-2)</text>
<text x="574.0" y="658.5" textLength="68.4" lengthAdjust="spacingAndGlyphs" fill="#000" stroke="#000" stroke-width="0.25">(00-2)</text>
</g>
</svg>
<!-- /MORPH -->

<!-- Display Options dock -->
<div class="a" style="left:0;top:845px;width:1625px;height:21.5px;background:#dadada;border:1px solid #c9c9c9"></div>
<div class="t" style="left:5.4px;top:849.5px">Display Options</div>
<!-- DISPLAYOPTS -->
<div class="gb" style="left:4.4px;top:881.7px;width:1074.3px;height:132.6px"></div>
<div class="a" style="left:11px;top:876px;width:46px;height:12px;background:#f0f0f0"></div>
<div class="t" style="left:14.2px;top:874.7px">Display</div>
<div class="cb dis" style="left:16.2px;top:904.3px"></div>
<div class="t g" style="left:34.4px;top:904px;color:#8d8d8d">Packing</div>
<div class="cb on" style="left:16.2px;top:930.4px"></div>
<div class="t" style="left:34.4px;top:930px">Asymmetric Unit</div>
<div class="cb" style="left:16.2px;top:956.1px"></div>
<div class="t" style="left:34.3px;top:956px">Auto centre</div>
<div class="btn" style="left:17.5px;top:981.4px;width:108px;height:21.2px">Reset</div>
<div class="a" style="left:133.3px;top:911.2px;width:852.5px;height:82.4px;background:#fff;border:1px solid #8a9099"></div>
<div class="a" style="left:134.3px;top:912.3px;width:850.5px;height:17.3px;background:#d9d9d9"></div>
<div class="cb" style="left:137px;top:915px;width:12.5px;height:12.5px"></div>
<div class="t" style="left:155.8px;top:915px">Short Contact</div>
<div class="t" style="left:247px;top:915px">&lt; (sum of vdW radii)</div>
<div class="cb" style="left:137px;top:933px;width:12.5px;height:12.5px"></div>
<div class="t" style="left:155.8px;top:933px">H-Bond</div>
<div class="t" style="left:247px;top:933px">Default definition</div>
<div class="btn" style="left:993.5px;top:902.4px;width:72px;height:21px">Contacts...</div>
<div class="btn f" style="left:993.5px;top:932.4px;width:72px;height:21px;background:#e0eef9;text-align:left;padding-left:3px">More Info <span style="display:inline-block;width:0;height:0;border-left:4.5px solid transparent;border-right:4.5px solid transparent;border-top:5px solid #000;vertical-align:2px;margin-left:1px"></span></div>
<div class="btn" style="left:993.5px;top:962.5px;width:72px;height:21.8px">Powder...</div>
<div class="gb" style="left:1085.1px;top:881.7px;width:535.7px;height:132.6px"></div>
<div class="a" style="left:1092px;top:876px;width:48px;height:12px;background:#f0f0f0"></div>
<div class="t" style="left:1095.3px;top:874.7px">Options</div>
<div class="cb" style="left:1097.2px;top:904.7px"></div>
<div class="t" style="left:1115.3px;top:904.7px;">Show hydrogens</div>
<div class="cb" style="left:1097.2px;top:930.6px"></div>
<div class="t" style="left:1115.3px;top:930.6px;">Show cell axes</div>
<div class="cb" style="left:1097.2px;top:956.3px"></div>
<div class="t" style="left:1115.3px;top:956.3px;">Label atoms</div>
<div class="cb" style="left:1215px;top:904.7px"></div>
<div class="t" style="left:1232.8px;top:904.7px;">Depth cue</div>
<div class="cb" style="left:1215px;top:930.6px"></div>
<div class="t" style="left:1232.8px;top:930.6px;">Z-Clipping</div>
<div class="cb dis" style="left:1215px;top:956.3px"></div>
<div class="t" style="left:1232.8px;top:956.3px;color:#8d8d8d">Stereo</div>
<svg class="a" style="left:1587px;top:850px" width="12" height="12"><rect x="1.5" y="4.5" width="6" height="5" fill="none" stroke="#222" stroke-width="1.2"/><path d="M4 4.5V2h6v5H7.5" fill="none" stroke="#222" stroke-width="1.2"/></svg>
<svg class="a" style="left:1608px;top:851px" width="11" height="11"><path d="M1.5 1.5L9 9M9 1.5L1.5 9" stroke="#222" stroke-width="1.7"/></svg>
<!-- /DISPLAYOPTS -->

<!-- Structure navigator dock -->
<div class="a" style="left:1630px;top:129.3px;width:1293px;height:20.5px;background:#dadada;border:1px solid #c9c9c9"></div>
<div class="t" style="left:1635px;top:134px">Structure Navigator</div>
<!-- NAV -->
<div class="a" style="left:1630px;top:150px;width:293px;height:888px;background:#f0f0f0"></div>
<div class="a" style="left:1634px;top:156px;width:287px;height:32px;border:1px solid #8a9099;border-bottom:2px solid #737a84;background:#f0f0f0"></div>
<div class="a" style="left:1636px;top:158.5px;width:218px;height:26px;background:#fff"></div>
<div class="t" style="left:1639.5px;top:165.5px">ABAMOJ</div>
<div class="btn" style="left:1856px;top:160.5px;width:60px;height:22px;line-height:20px">Find</div>
<div class="a" style="left:1634px;top:188px;width:287px;height:699px;background:#fff;border:1px solid #8a9099;border-top:none"></div>
<div class="a" style="left:1902.5px;top:188px;width:17.5px;height:698px;background:#f3f3f3"></div>
<div class="a" style="left:1911px;top:205px;width:2px;height:18px;background:#858585;border-radius:1px"></div>
<div class="a" style="left:1778.5px;top:188px;width:1px;height:24px;background:#e5e5e5"></div>
<div class="t" style="left:1639px;top:193.7px">Crystal Structures</div>
<div class="t" style="left:1783px;top:193.7px">Spacegroup</div>
<div class="a" style="left:1695px;top:212.3px;width:208px;height:17.3px;background:#d9d9d9;border-radius:3px"></div>
<div class="t" style="left:1698.3px;top:214.7px">ABAMOJ</div>
<div class="t" style="left:1783px;top:214.7px">P21/n</div>
<div class="t" style="left:1698.3px;top:232.9px">ABAMUM</div>
<div class="t" style="left:1783px;top:232.9px">P-1</div>
<div class="t" style="left:1698.3px;top:251.0px">ABAMUN</div>
<div class="t" style="left:1783px;top:251.0px">C2/c</div>
<div class="t" style="left:1698.3px;top:269.2px">ABAMUO</div>
<div class="t" style="left:1783px;top:269.2px">P-1</div>
<div class="t" style="left:1698.3px;top:287.4px">ABAMUP</div>
<div class="t" style="left:1783px;top:287.4px">P21/n</div>
<div class="t" style="left:1698.3px;top:305.6px">ABANAT</div>
<div class="t" style="left:1783px;top:305.6px">P-1</div>
<div class="t" style="left:1698.3px;top:323.7px">ABANAU</div>
<div class="t" style="left:1783px;top:323.7px">P21/c</div>
<div class="t" style="left:1698.3px;top:341.9px">ABANAV</div>
<div class="t" style="left:1783px;top:341.9px">P-1</div>
<div class="t" style="left:1698.3px;top:360.1px">ABANAW</div>
<div class="t" style="left:1783px;top:360.1px">P21/n</div>
<div class="t" style="left:1698.3px;top:378.2px">ABANEA</div>
<div class="t" style="left:1783px;top:378.2px">P21/c</div>
<div class="t" style="left:1698.3px;top:396.4px">ABANEX</div>
<div class="t" style="left:1783px;top:396.4px">P-1</div>
<div class="t" style="left:1698.3px;top:414.6px">ABANEY</div>
<div class="t" style="left:1783px;top:414.6px">P21/n</div>
<div class="t" style="left:1698.3px;top:432.7px">ABANEY01</div>
<div class="t" style="left:1783px;top:432.7px">P21/n</div>
<div class="t" style="left:1698.3px;top:450.9px">ABANEZ</div>
<div class="t" style="left:1783px;top:450.9px">P21/n</div>
<div class="t" style="left:1698.3px;top:469.1px">ABANIB</div>
<div class="t" style="left:1783px;top:469.1px">P21/n</div>
<div class="t" style="left:1698.3px;top:487.2px">ABANIC</div>
<div class="t" style="left:1783px;top:487.2px">P21/n</div>
<div class="t" style="left:1698.3px;top:505.4px">ABANID</div>
<div class="t" style="left:1783px;top:505.4px">P21/n</div>
<div class="t" style="left:1698.3px;top:523.6px">ABANIE</div>
<div class="t" style="left:1783px;top:523.6px">C2/c</div>
<div class="t" style="left:1698.3px;top:541.8px">ABANOH</div>
<div class="t" style="left:1783px;top:541.8px">P21/n</div>
<div class="t" style="left:1698.3px;top:559.9px">ABANOI</div>
<div class="t" style="left:1783px;top:559.9px">P21/n</div>
<div class="t" style="left:1698.3px;top:578.1px">ABANOJ</div>
<div class="t" style="left:1783px;top:578.1px">P21</div>
<div class="t" style="left:1698.3px;top:596.3px">ABANOK</div>
<div class="t" style="left:1783px;top:596.3px">P-1</div>
<div class="t" style="left:1698.3px;top:614.4px">ABANUN</div>
<div class="t" style="left:1783px;top:614.4px">C2/c</div>
<div class="t" style="left:1698.3px;top:632.6px">ABANUO</div>
<div class="t" style="left:1783px;top:632.6px">P212121</div>
<div class="t" style="left:1698.3px;top:650.8px">ABANUP</div>
<div class="t" style="left:1783px;top:650.8px">P21</div>
<div class="t" style="left:1698.3px;top:669.0px">ABANUQ</div>
<div class="t" style="left:1783px;top:669.0px">P21/c</div>
<div class="t" style="left:1698.3px;top:687.1px">ABAPAV</div>
<div class="t" style="left:1783px;top:687.1px">C2221</div>
<div class="t" style="left:1698.3px;top:705.3px">ABAPAW</div>
<div class="t" style="left:1783px;top:705.3px">P212121</div>
<div class="t" style="left:1698.3px;top:723.5px">ABAPAX</div>
<div class="t" style="left:1783px;top:723.5px">P21</div>
<div class="t" style="left:1698.3px;top:741.6px">ABAPAY</div>
<div class="t" style="left:1783px;top:741.6px">P-1</div>
<div class="t" style="left:1698.3px;top:759.8px">ABAPCU</div>
<div class="t" style="left:1783px;top:759.8px">P-1</div>
<div class="t" style="left:1698.3px;top:778.0px">ABAPEA</div>
<div class="t" style="left:1783px;top:778.0px">P212121</div>
<div class="t" style="left:1698.3px;top:796.1px">ABAPEB</div>
<div class="t" style="left:1783px;top:796.1px">P21</div>
<div class="t" style="left:1698.3px;top:814.3px">ABAPEC</div>
<div class="t" style="left:1783px;top:814.3px">P21/c</div>
<div class="t" style="left:1698.3px;top:832.5px">ABAPEZ</div>
<div class="t" style="left:1783px;top:832.5px">P21/n</div>
<div class="t" style="left:1698.3px;top:850.7px">ABAPIE</div>
<div class="t" style="left:1783px;top:850.7px">P-1</div>
<div class="t" style="left:1698.3px;top:868.8px">ABAPIF</div>
<div class="t" style="left:1783px;top:868.8px">P212121</div>
<div class="btn" style="left:1635.7px;top:889px;width:141px;height:20.5px;line-height:18px">&lt; &lt;</div>
<div class="btn" style="left:1779.6px;top:889px;width:139.6px;height:20.5px;line-height:18px">&gt; &gt;</div>
<div class="cb on" style="left:1640px;top:920.4px"></div>
<div class="t" style="left:1658.2px;top:920px">Tree View</div>
<div class="gb" style="left:1634.3px;top:943.5px;width:286.4px;height:71px"></div>
<div class="cb" style="left:1715px;top:958.2px"></div>
<div class="t" style="left:1733.4px;top:958px">Multiple Structures</div>
<div class="btn" style="left:1716.2px;top:981.3px;width:121.2px;height:21px">Structures...</div>
<svg class="a" style="left:1886px;top:133px" width="12" height="12"><rect x="1.5" y="4.5" width="6" height="5" fill="none" stroke="#222" stroke-width="1.2"/><path d="M4 4.5V2h6v5H7.5" fill="none" stroke="#222" stroke-width="1.2"/></svg>
<svg class="a" style="left:1908px;top:134px" width="11" height="11"><path d="M1.5 1.5L9 9M9 1.5L1.5 9" stroke="#222" stroke-width="1.7"/></svg>
<!-- /NAV -->

<!-- Status bar -->
<div class="t" style="left:4.7px;top:1024.5px">Press the left mouse button and move the mouse to rotate the structure</div>

<!-- DIALOG -->
<div class="a" style="left:1059.8px;top:296.5px;width:370.8px;height:333.7px;background:#f0f0f0;border:1px solid #c9c9c9;border-radius:8px;box-shadow:0 8px 22px rgba(0,0,0,0.22),0 0 4px rgba(0,0,0,0.08);overflow:hidden"><div style="position:absolute;left:0;top:0;right:0;height:30.7px;background:#eef2f7"></div></div>
<svg class="a" style="left:1068px;top:303px" width="16" height="16" viewBox="0 0 16 16"><circle cx="8" cy="8" r="7.5" fill="#2b2b2b"/><circle cx="5" cy="6" r="1.7" fill="#ddd"/><circle cx="11" cy="6" r="1.7" fill="#ddd"/><circle cx="8" cy="11" r="1.7" fill="#ddd"/><path d="M5 6L8 11L11 6" stroke="#ddd" stroke-width="0.8" fill="none"/></svg>
<div class="t" style="left:1089.6px;top:305.2px">Morphology</div>
<svg class="a" style="left:1409px;top:305px" width="12" height="12"><path d="M1 1L11 11M11 1L1 11" stroke="#222" stroke-width="1.1"/></svg>
<div class="gb" style="left:1080.7px;top:355.8px;width:328.8px;height:191.5px"></div>
<div class="a" style="left:1085px;top:348px;width:120px;height:14px;background:#f0f0f0"></div>
<div class="cb on" style="left:1088px;top:348.2px"></div>
<div class="t" style="left:1106px;top:348.5px">Show Morphology</div>
<div class="t" style="left:1090px;top:380px">Scale factor:</div>
<div class="a" style="left:1168px;top:380.3px;width:104.5px;height:3.5px;background:#e7e7e7;border:1px solid #d6d6d6;border-radius:2px"></div>
<div class="a" style="left:1173px;top:393.4px;width:94.79999999999995px;height:4.3px;background:#a7a392"></div>
<svg class="a" style="left:1200.6px;top:372.7px" width="12" height="20"><path d="M0.5 1.5Q0.5 0.5 1.5 0.5H10.5Q11.5 0.5 11.5 1.5V13L6 19L0.5 13Z" fill="#0067c0"/></svg>
<div class="a" style="left:1276px;top:373.9px;width:38px;height:25.8px;background:#fff;border-bottom:1px solid #868686;border-radius:2px"></div>
<div class="t" style="left:1287px;top:381px">70</div>
<div class="cb on" style="left:1321px;top:379px"></div>
<div class="t" style="left:1339.5px;top:381px">Auto scale</div>
<div class="cb on" style="left:1090px;top:410px"></div>
<div class="t" style="left:1108.2px;top:411px">Show (hkl) labels</div>
<div class="cb on" style="left:1090px;top:438.8px"></div>
<div class="t" style="left:1108.2px;top:440px">Draw faces</div>
<div class="t" style="left:1177.3px;top:440px">Colour</div>
<div class="btn" style="left:1220.2px;top:437.3px;width:37px;height:17.2px"></div>
<div class="a" style="left:1231px;top:442.4px;width:16.2px;height:7.7px;background:#44cdf5"></div>
<div class="a" style="left:1273.2px;top:440.5px;width:84.29999999999995px;height:3.5px;background:#e7e7e7;border:1px solid #d6d6d6;border-radius:2px"></div>
<div class="a" style="left:1278.3px;top:452.8px;width:74.29999999999995px;height:4.3px;background:#a7a392"></div>
<svg class="a" style="left:1310px;top:432.9px" width="12" height="20"><path d="M0.5 1.5Q0.5 0.5 1.5 0.5H10.5Q11.5 0.5 11.5 1.5V13L6 19L0.5 13Z" fill="#0067c0"/></svg>
<div class="a" style="left:1361px;top:433.7px;width:38px;height:25.5px;background:#fff;border-bottom:1px solid #868686;border-radius:2px"></div>
<div class="t" style="left:1370.5px;top:441px">0.5</div>
<div class="cb on" style="left:1107px;top:469.3px"></div>
<div class="t" style="left:1125.2px;top:470px">Shadows</div>
<div class="cb on" style="left:1090px;top:495.1px"></div>
<div class="t" style="left:1108px;top:496px">Draw edges</div>
<div class="t" style="left:1182.3px;top:496px">Colour</div>
<div class="btn" style="left:1225.6px;top:493.3px;width:37px;height:17.3px"></div>
<div class="a" style="left:1236px;top:498.4px;width:16.2px;height:7.4px;background:#0000ee"></div>
<div class="cb on" style="left:1090px;top:522.4px"></div>
<div class="t" style="left:1108px;top:522.5px">Fill morphology with molecules</div>
<div class="btn f" style="left:1072.3px;top:566px;width:72.2px;height:21.8px">Open...</div>
<div class="btn" style="left:1072.3px;top:596.4px;width:72.2px;height:21.2px">Defaults</div>
<div class="btn" style="left:1345px;top:566px;width:72px;height:21.8px">Save...</div>
<div class="btn" style="left:1345px;top:596.4px;width:72px;height:21.2px">OK</div>
<!-- /DIALOG -->

</body></html>
